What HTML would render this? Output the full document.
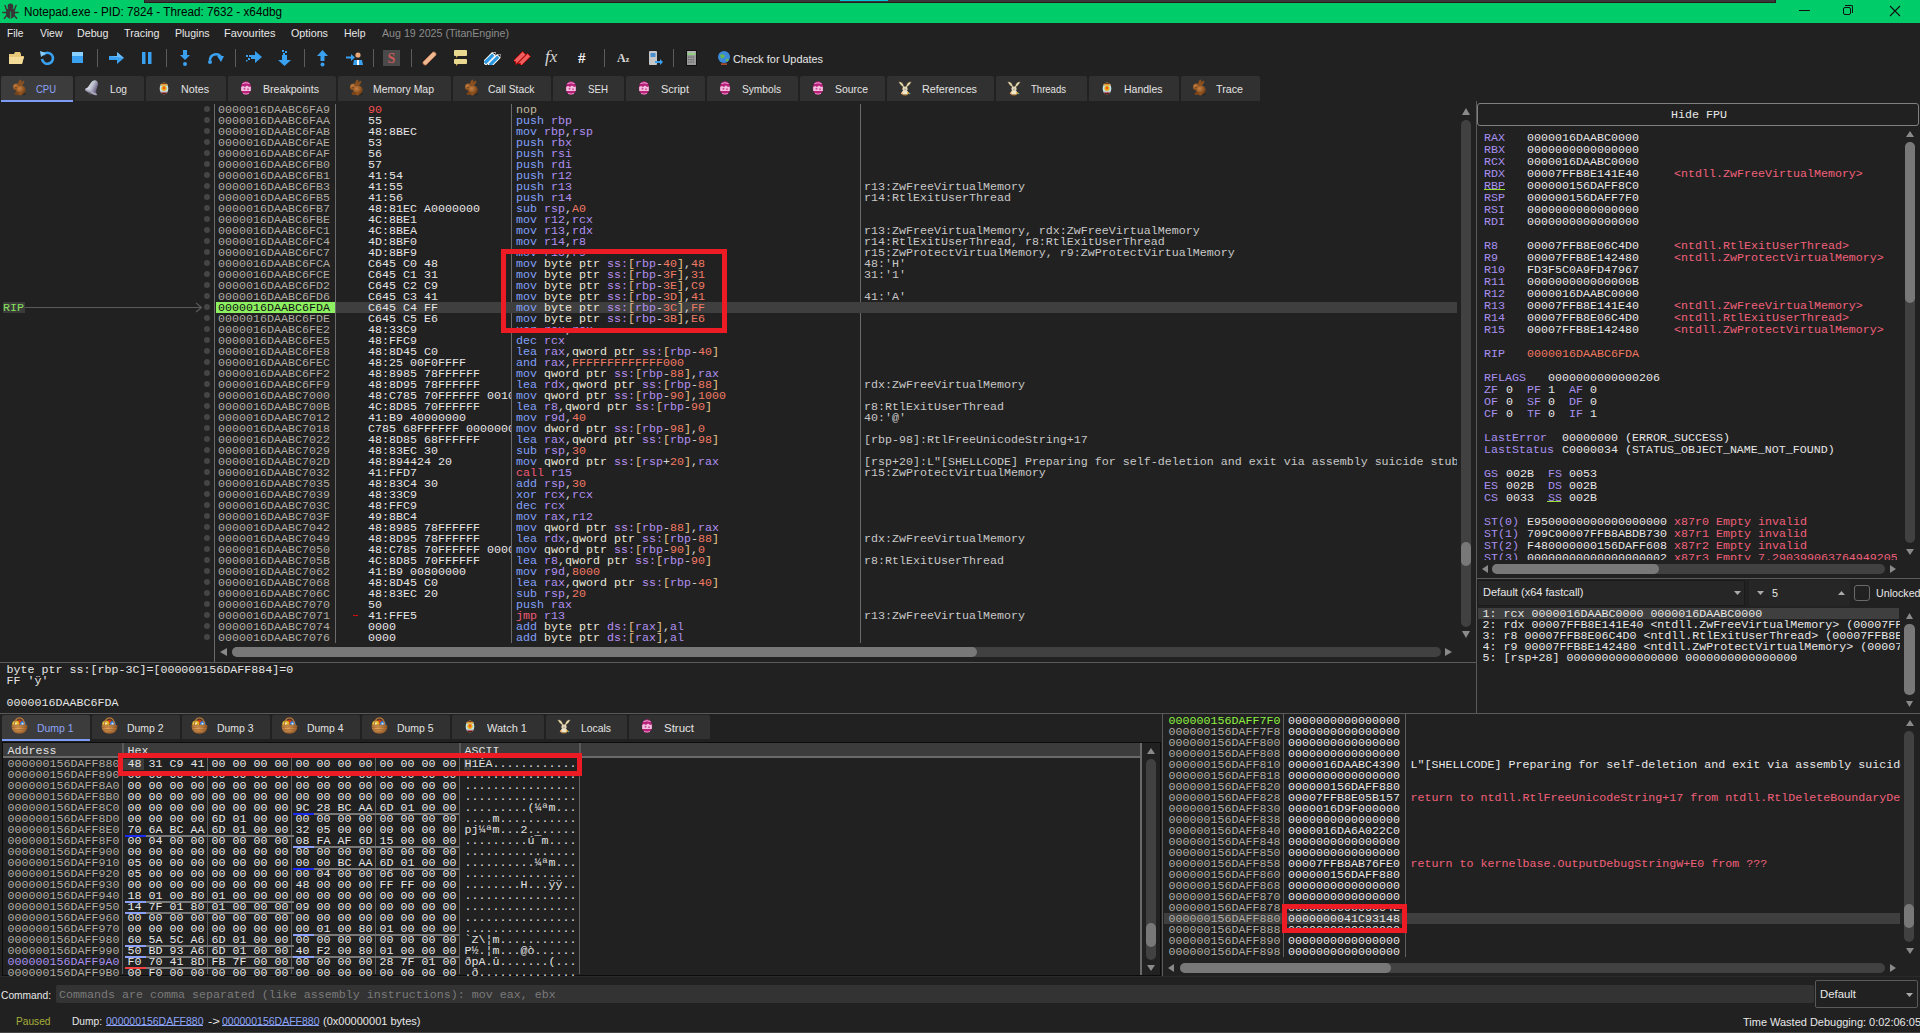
<!DOCTYPE html>
<html><head><meta charset="utf-8"><title>x64dbg</title>
<style>
html,body{margin:0;padding:0;width:1920px;height:1033px;overflow:hidden;background:#212121}
body>div,body>svg,body>div>div{position:absolute}
.m{font-family:'Liberation Mono', monospace;font-size:11.6667px;line-height:11px;white-space:pre}
.s{font-family:'Liberation Sans', sans-serif;line-height:14px;white-space:pre}
</style></head><body>
<div style="left:0px;top:0px;width:1920px;height:23px;background:#00cc6a;"></div>
<div style="left:144px;top:0px;width:1632px;height:3px;background:#2a1a1e;"></div>
<div style="left:145px;top:0px;width:1630px;height:2px;background:#383838;"></div>
<div style="left:840px;top:0px;width:48px;height:1px;background:#00c8d8;"></div>
<svg style="left:2px;top:3px" width="17" height="16" viewBox="0 0 17 16"><g fill="#363636" stroke="#363636" stroke-width="1.4" stroke-linecap="round"><circle cx="8.5" cy="3.2" r="2.8" stroke="none"/><ellipse cx="8.5" cy="10" rx="4.6" ry="5.6" stroke="none"/><path d="M4.6 7 L3 2.5 M12.4 7 L14 2.5 M4 9.5 L0.8 9.5 M13 9.5 L16.2 9.5 M4.6 12.5 L2.3 15.5 M12.4 12.5 L14.7 15.5" fill="none"/></g><rect x="7.9" y="8.5" width="1.3" height="7" fill="#0a9a52"/></svg>
<div class="s" style="left:24px;top:5px;color:#000;font-size:12px;"><span style="display:inline-block;transform:scaleX(0.9774);transform-origin:0 0">Notepad.exe - PID: 7824 - Thread: 7632 - x64dbg</span></div>
<div style="left:1799px;top:10px;width:11px;height:1px;background:#111;"></div>
<div style="left:1843px;top:7px;width:8px;height:8px;border:1px solid #111;border-radius:2px;box-sizing:border-box"></div>
<div style="left:1845px;top:5px;width:8px;height:8px;border-top:1px solid #111;border-right:1px solid #111;border-radius:0 2px 0 0;box-sizing:border-box"></div>
<svg style="left:1889px;top:5px" width="12" height="12" viewBox="0 0 12 12"><path d="M1 1 L11 11 M11 1 L1 11" stroke="#111" stroke-width="1.1"/></svg>
<div class="s" style="left:7px;top:26px;color:#e8e8e8;font-size:11px;"><span style="display:inline-block;transform:scaleX(0.9304);transform-origin:0 0">File</span></div>
<div class="s" style="left:39.5px;top:26px;color:#e8e8e8;font-size:11px;"><span style="display:inline-block;transform:scaleX(0.9511);transform-origin:0 0">View</span></div>
<div class="s" style="left:77px;top:26px;color:#e8e8e8;font-size:11px;"><span style="display:inline-block;transform:scaleX(0.9716);transform-origin:0 0">Debug</span></div>
<div class="s" style="left:124px;top:26px;color:#e8e8e8;font-size:11px;"><span style="display:inline-block;transform:scaleX(0.9785);transform-origin:0 0">Tracing</span></div>
<div class="s" style="left:175px;top:26px;color:#e8e8e8;font-size:11px;"><span style="display:inline-block;transform:scaleX(0.9563);transform-origin:0 0">Plugins</span></div>
<div class="s" style="left:224px;top:26px;color:#e8e8e8;font-size:11px;"><span style="display:inline-block;transform:scaleX(1.0027);transform-origin:0 0">Favourites</span></div>
<div class="s" style="left:291px;top:26px;color:#e8e8e8;font-size:11px;"><span style="display:inline-block;transform:scaleX(0.9757);transform-origin:0 0">Options</span></div>
<div class="s" style="left:344px;top:26px;color:#e8e8e8;font-size:11px;"><span style="display:inline-block;transform:scaleX(0.9503);transform-origin:0 0">Help</span></div>
<div class="s" style="left:382px;top:26px;color:#8c8c8c;font-size:11px;"><span style="display:inline-block;transform:scaleX(0.9689);transform-origin:0 0">Aug 19 2025 (TitanEngine)</span></div>
<div style="left:97px;top:49px;width:1px;height:18px;background:#5c5c5c;"></div>
<div style="left:166px;top:49px;width:1px;height:18px;background:#5c5c5c;"></div>
<div style="left:235px;top:49px;width:1px;height:18px;background:#5c5c5c;"></div>
<div style="left:304px;top:49px;width:1px;height:18px;background:#5c5c5c;"></div>
<div style="left:373px;top:49px;width:1px;height:18px;background:#5c5c5c;"></div>
<div style="left:411px;top:49px;width:1px;height:18px;background:#5c5c5c;"></div>
<div style="left:604px;top:49px;width:1px;height:18px;background:#5c5c5c;"></div>
<div style="left:673px;top:49px;width:1px;height:18px;background:#5c5c5c;"></div>
<svg style="left:8px;top:51px" width="17" height="14" viewBox="0 0 17 14"><path d="M1 3 L6 3 L7 1 L12 1 L13 3 L13 5 L16 5 L14 13 L1 13 Z" fill="#e8c878"/><path d="M1 6 L16 6 L14 13 L1 13 Z" fill="#f4dc98"/></svg>
<svg style="left:39px;top:50px" width="16" height="16" viewBox="0 0 16 16"><path d="M4 5 A5.5 5.5 0 1 1 3 9" fill="none" stroke="#3aa0f0" stroke-width="2.6"/><path d="M1 1 L7 3 L2 7 Z" fill="#8ad0ff"/></svg>
<svg style="left:71px;top:51px" width="13" height="13" viewBox="0 0 13 13"><rect x="1" y="1" width="11" height="11" fill="#3aa0f0"/><rect x="1" y="1" width="11" height="4" fill="#8ad0ff"/></svg>
<svg style="left:108px;top:51px" width="17" height="14" viewBox="0 0 17 14"><path d="M1 5 L9 5 L9 1 L16 7 L9 13 L9 9 L1 9 Z" fill="#3aa0f0"/><path d="M1 5 L9 5 L9 1 L16 7 Z" fill="#8ad0ff" opacity=".6"/></svg>
<svg style="left:141px;top:51px" width="12" height="14" viewBox="0 0 12 14"><rect x="1" y="1" width="3.5" height="12" fill="#3aa0f0"/><rect x="7" y="1" width="3.5" height="12" fill="#3aa0f0"/></svg>
<svg style="left:178px;top:49px" width="14" height="19" viewBox="0 0 14 19"><path d="M5 1 L9 1 L9 6 L12 6 L7 11 L2 6 L5 6 Z" fill="#3aa0f0"/><circle cx="7" cy="15" r="2" fill="#3aa0f0"/></svg>
<svg style="left:207px;top:49px" width="18" height="18" viewBox="0 0 18 18"><path d="M3 11 A6 6 0 0 1 14 8" fill="none" stroke="#3aa0f0" stroke-width="2.6"/><path d="M10 7 L17 7 L14 13 Z" fill="#3aa0f0"/><circle cx="3" cy="13" r="2" fill="#3aa0f0"/></svg>
<svg style="left:245px;top:50px" width="18" height="15" viewBox="0 0 18 15"><path d="M6 5 L10 5 L10 1 L17 7 L10 13 L10 9 L6 9 Z" fill="#3aa0f0"/><g fill="#3aa0f0"><rect x="1" y="5" width="2" height="2"/><rect x="4" y="5" width="2" height="2"/><rect x="3" y="8" width="2" height="2"/><rect x="1" y="10" width="1.5" height="1.5"/></g></svg>
<svg style="left:277px;top:49px" width="16" height="18" viewBox="0 0 16 18"><path d="M5 6 L10 6 L10 11 L14 11 L7.5 17 L1 11 L5 11 Z" fill="#3aa0f0"/><g fill="#3aa0f0"><rect x="5" y="1" width="2" height="2"/><rect x="8" y="2" width="2" height="2"/><rect x="6" y="4" width="2" height="2"/></g></svg>
<svg style="left:316px;top:49px" width="13" height="19" viewBox="0 0 13 19"><path d="M6.5 1 L12 7 L8.5 7 L8.5 12 L4.5 12 L4.5 7 L1 7 Z" fill="#3aa0f0"/><circle cx="6.5" cy="15.5" r="2" fill="#3aa0f0"/></svg>
<svg style="left:345px;top:51px" width="18" height="15" viewBox="0 0 18 15"><path d="M1 5.5 L6 5.5 L6 3 L10 6.5 L6 10 L6 7.5 L1 7.5 Z" fill="#3aa0f0"/><circle cx="13" cy="4" r="2.6" fill="#e8a878"/><path d="M8 14 L9 9 L17 9 L18 14 Z" fill="#3aa0f0"/><rect x="12" y="9" width="2" height="5" fill="#fff"/></svg>
<svg style="left:383px;top:50px" width="18" height="17" viewBox="0 0 18 17"><rect x="0" y="0" width="17" height="16" fill="#4a4a4a"/><text x="8.5" y="13" font-family="Liberation Serif" font-weight="bold" font-size="14" fill="#c85a5a" text-anchor="middle">S</text></svg>
<svg style="left:421px;top:50px" width="17" height="16" viewBox="0 0 17 16"><path d="M2 12 L12 2 A2.5 2.5 0 0 1 15 5 L5 15 A2.5 2.5 0 0 1 2 12 Z" fill="#f0b890" stroke="#c87850" stroke-width=".8"/></svg>
<svg style="left:453px;top:49px" width="15" height="18" viewBox="0 0 15 18"><rect x="1" y="1" width="13" height="6" rx="1" fill="#e8d890"/><rect x="1" y="10" width="13" height="5" rx="1" fill="#e8d890"/><path d="M3 7 L5 7 L3 9 Z M3 15 L5 15 L3 17 Z" fill="#c8a850"/></svg>
<svg style="left:484px;top:51px" width="17" height="14" viewBox="0 0 17 14"><g transform="rotate(-45 8.5 7)"><rect x="-1" y="3" width="13" height="4.2" fill="#2a98e0" stroke="#fff" stroke-width="1"/><path d="M12 3 L15 5.1 L12 7.2 Z" fill="#fff"/><circle cx="13" cy="5.1" r=".8" fill="#111"/><rect x="1" y="8" width="13" height="4.2" fill="#2a98e0" stroke="#fff" stroke-width="1"/><path d="M14 8 L17 10.1 L14 12.2 Z" fill="#fff"/><circle cx="15" cy="10.1" r=".8" fill="#111"/></g></svg>
<svg style="left:514px;top:50px" width="18" height="15" viewBox="0 0 18 15"><g transform="rotate(-45 9 7.5)"><path d="M-1 3 L13 3 L13 7.5 L-1 7.5 L1 5.2 Z" fill="#f06060" stroke="#c00000" stroke-width=".8"/><path d="M1 8 L15 8 L15 12 L1 12 L3 10 Z" fill="#f06060" stroke="#c00000" stroke-width=".8"/></g></svg>
<div style="left:545px;top:48px;font-family:'Liberation Serif';font-style:italic;font-size:17px;line-height:18px;color:#d8d8d8">fx</div>
<div style="left:578px;top:50px;font-family:'Liberation Serif';font-weight:bold;font-size:15px;line-height:17px;color:#f0f0f0">#</div>
<div style="left:617px;top:51px;font-family:'Liberation Serif';font-weight:bold;font-size:12px;line-height:14px;color:#d8d8d8">A<span style="font-size:8px">z</span></div>
<svg style="left:648px;top:50px" width="16" height="16" viewBox="0 0 16 16"><rect x="1" y="1" width="8" height="14" rx="1" fill="#c8c8c8"/><rect x="2.5" y="3" width="5" height="4" fill="#4a90d0"/><path d="M7 11 L12 11 L12 9 L15 12 L12 15 L12 13 L7 13 Z" fill="#3aa0f0"/></svg>
<svg style="left:686px;top:50px" width="11" height="16" viewBox="0 0 11 16"><rect x="0.5" y="0.5" width="10" height="15" fill="#9a9a9a" stroke="#111"/><rect x="1.5" y="1.5" width="8" height="1" fill="#ccc"/><rect x="1.5" y="3" width="8" height="2" fill="#90d080"/><g fill="#6a6a6a"><rect x="2" y="6.5" width="1.5" height="1.2"/><rect x="4.3" y="6.5" width="1.5" height="1.2"/><rect x="6.6" y="6.5" width="1.5" height="1.2"/><rect x="2" y="9" width="1.5" height="1.2"/><rect x="4.3" y="9" width="1.5" height="1.2"/><rect x="6.6" y="9" width="1.5" height="1.2"/><rect x="2" y="11.5" width="1.5" height="1.2"/><rect x="4.3" y="11.5" width="1.5" height="1.2"/><rect x="6.6" y="11.5" width="1.5" height="1.2"/></g></svg>
<svg style="left:717px;top:50px" width="14" height="15" viewBox="0 0 14 15"><circle cx="7" cy="7" r="6" fill="#3a8ad8"/><path d="M3 5 Q6 3 8 6 Q6 9 4 8 Z M9 9 Q11 8 12 10 Q10 12 9 11 Z" fill="#6ab84a"/><rect x="4" y="13.5" width="6" height="1.2" fill="#e06030"/></svg>
<div class="s" style="left:733px;top:51.5px;color:#e8e8e8;font-size:11px;"><span style="display:inline-block;transform:scaleX(0.9878);transform-origin:0 0">Check for Updates</span></div>
<div style="left:1px;top:76px;width:72px;height:25px;background:#3c3c3c;border-radius:2px 2px 0 0"></div>
<div style="left:1px;top:100px;width:72px;height:2px;background:#7c9cf8;"></div>
<svg style="left:11px;top:79px" width="16" height="17" viewBox="0 0 16 17"><defs><radialGradient id="gb" cx="35%" cy="35%" r="70%"><stop offset="0" stop-color="#c88040"/><stop offset="1" stop-color="#6a3a12"/></radialGradient></defs><ellipse cx="12" cy="15" rx="3" ry="1.2" fill="#1a1a1a" opacity=".5"/><path d="M7 6 Q7 1 10 0.5 Q11 2 10 4 Q12 1 13.5 2 Q13 5 10.5 7 Z" fill="#8a5020"/><circle cx="5.5" cy="8" r="3.6" fill="url(#gb)"/><ellipse cx="10" cy="11" rx="4.8" ry="4.6" fill="url(#gb)"/><ellipse cx="6" cy="14.5" rx="2.5" ry="1.6" fill="#7a4518"/><ellipse cx="9.5" cy="15" rx="2" ry="1.4" fill="#8a5020"/><circle cx="5" cy="8.3" r=".6" fill="#4a2008"/></svg>
<div class="s" style="left:36px;top:82px;color:#8ca4f8;font-size:11px;"><span style="display:inline-block;transform:scaleX(0.8608);transform-origin:0 0">CPU</span></div>
<div style="left:75px;top:76px;width:69px;height:25px;background:#313131;border-radius:2px 2px 0 0"></div>
<svg style="left:85px;top:79px" width="16" height="17" viewBox="0 0 16 17"><defs><linearGradient id="gbl" x1="0" y1="0" x2="1" y2="0"><stop offset="0" stop-color="#f4f6fa"/><stop offset=".45" stop-color="#b8bccc"/><stop offset=".8" stop-color="#6a6080"/><stop offset="1" stop-color="#9a94b0"/></linearGradient></defs><g transform="rotate(25 8 8)"><path d="M8 0.8 Q11.5 1 11.8 5.5 L12.5 10.5 Q13.5 12.5 15 13.5 L1 13.5 Q2.5 12.5 3.5 10.5 L4.2 5.5 Q4.5 1 8 0.8 Z" fill="url(#gbl)"/><ellipse cx="8" cy="13.6" rx="7" ry="1.3" fill="#a8a4bc"/><circle cx="8" cy="15.2" r="1.2" fill="#555"/></g></svg>
<div class="s" style="left:110px;top:82px;color:#e4e4e4;font-size:11px;"><span style="display:inline-block;transform:scaleX(0.9260);transform-origin:0 0">Log</span></div>
<div style="left:146px;top:76px;width:80px;height:25px;background:#313131;border-radius:2px 2px 0 0"></div>
<svg style="left:156px;top:79px" width="16" height="17" viewBox="0 0 16 17"><defs><clipPath id="ce"><ellipse cx="8" cy="9.5" rx="4.3" ry="6"/></clipPath></defs><g clip-path="url(#ce)"><rect x="0" y="0" width="16" height="17" fill="#c0e4e4"/><rect x="0" y="0" width="16" height="5.5" fill="#7a3810"/><rect x="0" y="5" width="16" height="1.6" fill="#e0a030"/><rect x="0" y="12.8" width="16" height="1.5" fill="#b06878"/><rect x="0" y="14" width="16" height="4" fill="#5a1808"/></g><circle cx="8" cy="9.3" r="2.6" fill="#f0b020"/><circle cx="8" cy="9" r="1.4" fill="#f06010"/></svg>
<div class="s" style="left:181px;top:82px;color:#e4e4e4;font-size:11px;"><span style="display:inline-block;transform:scaleX(0.9739);transform-origin:0 0">Notes</span></div>
<div style="left:228px;top:76px;width:108px;height:25px;background:#313131;border-radius:2px 2px 0 0"></div>
<svg style="left:238px;top:79px" width="16" height="17" viewBox="0 0 16 17"><ellipse cx="8" cy="9" rx="5.2" ry="6.8" fill="#b8207a"/><path d="M4.5 4.5 Q8 3 11.5 4.5" stroke="#f0a8d8" stroke-width="1" fill="none"/><path d="M3.2 8 L5 7 L7 8 L9 6.5 L11 8 L12.8 7.5 L12.8 12 L3.2 12 Z" fill="#f4c0e0"/><circle cx="6.5" cy="9.8" r="1" fill="#c84a98"/><circle cx="10" cy="10.2" r="1" fill="#d05aa0"/><path d="M5 14.5 Q8 15.5 11 14.5" stroke="#e8a0c8" stroke-width=".9" fill="none"/></svg>
<div class="s" style="left:263px;top:82px;color:#e4e4e4;font-size:11px;"><span style="display:inline-block;transform:scaleX(0.9640);transform-origin:0 0">Breakpoints</span></div>
<div style="left:338px;top:76px;width:113px;height:25px;background:#313131;border-radius:2px 2px 0 0"></div>
<svg style="left:348px;top:79px" width="16" height="17" viewBox="0 0 16 17"><defs><radialGradient id="gb" cx="35%" cy="35%" r="70%"><stop offset="0" stop-color="#c88040"/><stop offset="1" stop-color="#6a3a12"/></radialGradient></defs><ellipse cx="12" cy="15" rx="3" ry="1.2" fill="#1a1a1a" opacity=".5"/><path d="M7 6 Q7 1 10 0.5 Q11 2 10 4 Q12 1 13.5 2 Q13 5 10.5 7 Z" fill="#8a5020"/><circle cx="5.5" cy="8" r="3.6" fill="url(#gb)"/><ellipse cx="10" cy="11" rx="4.8" ry="4.6" fill="url(#gb)"/><ellipse cx="6" cy="14.5" rx="2.5" ry="1.6" fill="#7a4518"/><ellipse cx="9.5" cy="15" rx="2" ry="1.4" fill="#8a5020"/><circle cx="5" cy="8.3" r=".6" fill="#4a2008"/></svg>
<div class="s" style="left:373px;top:82px;color:#e4e4e4;font-size:11px;"><span style="display:inline-block;transform:scaleX(0.9503);transform-origin:0 0">Memory Map</span></div>
<div style="left:453px;top:76px;width:98px;height:25px;background:#313131;border-radius:2px 2px 0 0"></div>
<svg style="left:463px;top:79px" width="16" height="17" viewBox="0 0 16 17"><defs><radialGradient id="gb" cx="35%" cy="35%" r="70%"><stop offset="0" stop-color="#c88040"/><stop offset="1" stop-color="#6a3a12"/></radialGradient></defs><ellipse cx="12" cy="15" rx="3" ry="1.2" fill="#1a1a1a" opacity=".5"/><path d="M7 6 Q7 1 10 0.5 Q11 2 10 4 Q12 1 13.5 2 Q13 5 10.5 7 Z" fill="#8a5020"/><circle cx="5.5" cy="8" r="3.6" fill="url(#gb)"/><ellipse cx="10" cy="11" rx="4.8" ry="4.6" fill="url(#gb)"/><ellipse cx="6" cy="14.5" rx="2.5" ry="1.6" fill="#7a4518"/><ellipse cx="9.5" cy="15" rx="2" ry="1.4" fill="#8a5020"/><circle cx="5" cy="8.3" r=".6" fill="#4a2008"/></svg>
<div class="s" style="left:488px;top:82px;color:#e4e4e4;font-size:11px;"><span style="display:inline-block;transform:scaleX(0.9388);transform-origin:0 0">Call Stack</span></div>
<div style="left:553px;top:76px;width:71px;height:25px;background:#313131;border-radius:2px 2px 0 0"></div>
<svg style="left:563px;top:79px" width="16" height="17" viewBox="0 0 16 17"><ellipse cx="8" cy="9" rx="5.2" ry="6.8" fill="#b8207a"/><path d="M4.5 4.5 Q8 3 11.5 4.5" stroke="#f0a8d8" stroke-width="1" fill="none"/><path d="M3.2 8 L5 7 L7 8 L9 6.5 L11 8 L12.8 7.5 L12.8 12 L3.2 12 Z" fill="#f4c0e0"/><circle cx="6.5" cy="9.8" r="1" fill="#c84a98"/><circle cx="10" cy="10.2" r="1" fill="#d05aa0"/><path d="M5 14.5 Q8 15.5 11 14.5" stroke="#e8a0c8" stroke-width=".9" fill="none"/></svg>
<div class="s" style="left:588px;top:82px;color:#e4e4e4;font-size:11px;"><span style="display:inline-block;transform:scaleX(0.8840);transform-origin:0 0">SEH</span></div>
<div style="left:626px;top:76px;width:79px;height:25px;background:#313131;border-radius:2px 2px 0 0"></div>
<svg style="left:636px;top:79px" width="16" height="17" viewBox="0 0 16 17"><ellipse cx="8" cy="9" rx="5.2" ry="6.8" fill="#b8207a"/><path d="M4.5 4.5 Q8 3 11.5 4.5" stroke="#f0a8d8" stroke-width="1" fill="none"/><path d="M3.2 8 L5 7 L7 8 L9 6.5 L11 8 L12.8 7.5 L12.8 12 L3.2 12 Z" fill="#f4c0e0"/><circle cx="6.5" cy="9.8" r="1" fill="#c84a98"/><circle cx="10" cy="10.2" r="1" fill="#d05aa0"/><path d="M5 14.5 Q8 15.5 11 14.5" stroke="#e8a0c8" stroke-width=".9" fill="none"/></svg>
<div class="s" style="left:661px;top:82px;color:#e4e4e4;font-size:11px;"><span style="display:inline-block;transform:scaleX(0.9956);transform-origin:0 0">Script</span></div>
<div style="left:707px;top:76px;width:91px;height:25px;background:#313131;border-radius:2px 2px 0 0"></div>
<svg style="left:717px;top:79px" width="16" height="17" viewBox="0 0 16 17"><ellipse cx="8" cy="9" rx="5.2" ry="6.8" fill="#b8207a"/><path d="M4.5 4.5 Q8 3 11.5 4.5" stroke="#f0a8d8" stroke-width="1" fill="none"/><path d="M3.2 8 L5 7 L7 8 L9 6.5 L11 8 L12.8 7.5 L12.8 12 L3.2 12 Z" fill="#f4c0e0"/><circle cx="6.5" cy="9.8" r="1" fill="#c84a98"/><circle cx="10" cy="10.2" r="1" fill="#d05aa0"/><path d="M5 14.5 Q8 15.5 11 14.5" stroke="#e8a0c8" stroke-width=".9" fill="none"/></svg>
<div class="s" style="left:742px;top:82px;color:#e4e4e4;font-size:11px;"><span style="display:inline-block;transform:scaleX(0.9244);transform-origin:0 0">Symbols</span></div>
<div style="left:800px;top:76px;width:85px;height:25px;background:#313131;border-radius:2px 2px 0 0"></div>
<svg style="left:810px;top:79px" width="16" height="17" viewBox="0 0 16 17"><ellipse cx="8" cy="9" rx="5.2" ry="6.8" fill="#b8207a"/><path d="M4.5 4.5 Q8 3 11.5 4.5" stroke="#f0a8d8" stroke-width="1" fill="none"/><path d="M3.2 8 L5 7 L7 8 L9 6.5 L11 8 L12.8 7.5 L12.8 12 L3.2 12 Z" fill="#f4c0e0"/><circle cx="6.5" cy="9.8" r="1" fill="#c84a98"/><circle cx="10" cy="10.2" r="1" fill="#d05aa0"/><path d="M5 14.5 Q8 15.5 11 14.5" stroke="#e8a0c8" stroke-width=".9" fill="none"/></svg>
<div class="s" style="left:835px;top:82px;color:#e4e4e4;font-size:11px;"><span style="display:inline-block;transform:scaleX(0.9467);transform-origin:0 0">Source</span></div>
<div style="left:887px;top:76px;width:107px;height:25px;background:#313131;border-radius:2px 2px 0 0"></div>
<svg style="left:897px;top:79px" width="16" height="17" viewBox="0 0 16 17"><path d="M1.5 3 Q3 2 5.5 4 L7.5 8 L6.5 8.5 Q3 6 1.5 3 Z" fill="#e8dcb0" stroke="#3a3020" stroke-width=".5"/><path d="M14.5 3 Q13 2 10.5 4 L8.5 8 L9.5 8.5 Q13 6 14.5 3 Z" fill="#e8dcb0" stroke="#3a3020" stroke-width=".5"/><ellipse cx="8" cy="10" rx="2.6" ry="2.4" fill="#e4d8b8"/><ellipse cx="8" cy="10.5" rx="1.2" ry="1" fill="#b8b0a0"/><ellipse cx="8" cy="14" rx="3.2" ry="2.4" fill="#f0e6c8"/><rect x="5.5" y="15.5" width="5" height="1.2" fill="#6a4010"/><circle cx="4.8" cy="14.2" r="1" fill="#f0a060"/><circle cx="11.2" cy="14" r="1" fill="#e0a020"/><circle cx="12.6" cy="14.6" r=".8" fill="#60a0a0"/></svg>
<div class="s" style="left:922px;top:82px;color:#e4e4e4;font-size:11px;"><span style="display:inline-block;transform:scaleX(0.9775);transform-origin:0 0">References</span></div>
<div style="left:996px;top:76px;width:91px;height:25px;background:#313131;border-radius:2px 2px 0 0"></div>
<svg style="left:1006px;top:79px" width="16" height="17" viewBox="0 0 16 17"><path d="M1.5 3 Q3 2 5.5 4 L7.5 8 L6.5 8.5 Q3 6 1.5 3 Z" fill="#e8dcb0" stroke="#3a3020" stroke-width=".5"/><path d="M14.5 3 Q13 2 10.5 4 L8.5 8 L9.5 8.5 Q13 6 14.5 3 Z" fill="#e8dcb0" stroke="#3a3020" stroke-width=".5"/><ellipse cx="8" cy="10" rx="2.6" ry="2.4" fill="#e4d8b8"/><ellipse cx="8" cy="10.5" rx="1.2" ry="1" fill="#b8b0a0"/><ellipse cx="8" cy="14" rx="3.2" ry="2.4" fill="#f0e6c8"/><rect x="5.5" y="15.5" width="5" height="1.2" fill="#6a4010"/><circle cx="4.8" cy="14.2" r="1" fill="#f0a060"/><circle cx="11.2" cy="14" r="1" fill="#e0a020"/><circle cx="12.6" cy="14.6" r=".8" fill="#60a0a0"/></svg>
<div class="s" style="left:1031px;top:82px;color:#e4e4e4;font-size:11px;"><span style="display:inline-block;transform:scaleX(0.8672);transform-origin:0 0">Threads</span></div>
<div style="left:1089px;top:76px;width:90px;height:25px;background:#313131;border-radius:2px 2px 0 0"></div>
<svg style="left:1099px;top:79px" width="16" height="17" viewBox="0 0 16 17"><defs><clipPath id="ce"><ellipse cx="8" cy="9.5" rx="4.3" ry="6"/></clipPath></defs><g clip-path="url(#ce)"><rect x="0" y="0" width="16" height="17" fill="#c0e4e4"/><rect x="0" y="0" width="16" height="5.5" fill="#7a3810"/><rect x="0" y="5" width="16" height="1.6" fill="#e0a030"/><rect x="0" y="12.8" width="16" height="1.5" fill="#b06878"/><rect x="0" y="14" width="16" height="4" fill="#5a1808"/></g><circle cx="8" cy="9.3" r="2.6" fill="#f0b020"/><circle cx="8" cy="9" r="1.4" fill="#f06010"/></svg>
<div class="s" style="left:1124px;top:82px;color:#e4e4e4;font-size:11px;"><span style="display:inline-block;transform:scaleX(0.9539);transform-origin:0 0">Handles</span></div>
<div style="left:1181px;top:76px;width:79px;height:25px;background:#313131;border-radius:2px 2px 0 0"></div>
<svg style="left:1191px;top:79px" width="16" height="17" viewBox="0 0 16 17"><defs><radialGradient id="gb" cx="35%" cy="35%" r="70%"><stop offset="0" stop-color="#c88040"/><stop offset="1" stop-color="#6a3a12"/></radialGradient></defs><ellipse cx="12" cy="15" rx="3" ry="1.2" fill="#1a1a1a" opacity=".5"/><path d="M7 6 Q7 1 10 0.5 Q11 2 10 4 Q12 1 13.5 2 Q13 5 10.5 7 Z" fill="#8a5020"/><circle cx="5.5" cy="8" r="3.6" fill="url(#gb)"/><ellipse cx="10" cy="11" rx="4.8" ry="4.6" fill="url(#gb)"/><ellipse cx="6" cy="14.5" rx="2.5" ry="1.6" fill="#7a4518"/><ellipse cx="9.5" cy="15" rx="2" ry="1.4" fill="#8a5020"/><circle cx="5" cy="8.3" r=".6" fill="#4a2008"/></svg>
<div class="s" style="left:1216px;top:82px;color:#e4e4e4;font-size:11px;"><span style="display:inline-block;transform:scaleX(0.9741);transform-origin:0 0">Trace</span></div>
<div style="left:214px;top:104px;width:1px;height:539px;background:#6a6a6a;"></div>
<div style="left:335px;top:104px;width:1px;height:539px;background:#6a6a6a;"></div>
<div style="left:511px;top:104px;width:1px;height:539px;background:#6a6a6a;"></div>
<div style="left:860px;top:104px;width:1px;height:539px;background:#6a6a6a;"></div>
<div style="left:214px;top:643px;width:1px;height:19px;background:#6a6a6a;"></div>
<div style="left:203.5px;top:106px;width:6px;height:6px;border-radius:50%;background:#454545"></div>
<div class="m" style="left:218px;top:105px;color:#b0aca4;">0000016DAABC6FA9</div>
<div class="m" style="left:368px;top:105px;color:#f05050;width:143px;overflow:hidden">90</div>
<div class="m" style="left:516px;top:105px;width:344px;overflow:hidden"><span style="color:#c0bca0">nop</span></div>
<div style="left:203.5px;top:117px;width:6px;height:6px;border-radius:50%;background:#454545"></div>
<div class="m" style="left:218px;top:116px;color:#b0aca4;">0000016DAABC6FAA</div>
<div class="m" style="left:368px;top:116px;color:#e6e6e6;width:143px;overflow:hidden">55</div>
<div class="m" style="left:516px;top:116px;width:344px;overflow:hidden"><span style="color:#82a0f8">push</span><span style="color:#d8d8d8"> </span><span style="color:#b090f0">rbp</span></div>
<div style="left:203.5px;top:128px;width:6px;height:6px;border-radius:50%;background:#454545"></div>
<div class="m" style="left:218px;top:127px;color:#b0aca4;">0000016DAABC6FAB</div>
<div class="m" style="left:368px;top:127px;color:#e6e6e6;width:143px;overflow:hidden">48:8BEC</div>
<div class="m" style="left:516px;top:127px;width:344px;overflow:hidden"><span style="color:#82a0f8">mov</span><span style="color:#d8d8d8"> </span><span style="color:#b090f0">rbp</span><span style="color:#d8d8d8">,</span><span style="color:#b090f0">rsp</span></div>
<div style="left:203.5px;top:139px;width:6px;height:6px;border-radius:50%;background:#454545"></div>
<div class="m" style="left:218px;top:138px;color:#b0aca4;">0000016DAABC6FAE</div>
<div class="m" style="left:368px;top:138px;color:#e6e6e6;width:143px;overflow:hidden">53</div>
<div class="m" style="left:516px;top:138px;width:344px;overflow:hidden"><span style="color:#82a0f8">push</span><span style="color:#d8d8d8"> </span><span style="color:#b090f0">rbx</span></div>
<div style="left:203.5px;top:150px;width:6px;height:6px;border-radius:50%;background:#454545"></div>
<div class="m" style="left:218px;top:149px;color:#b0aca4;">0000016DAABC6FAF</div>
<div class="m" style="left:368px;top:149px;color:#e6e6e6;width:143px;overflow:hidden">56</div>
<div class="m" style="left:516px;top:149px;width:344px;overflow:hidden"><span style="color:#82a0f8">push</span><span style="color:#d8d8d8"> </span><span style="color:#b090f0">rsi</span></div>
<div style="left:203.5px;top:161px;width:6px;height:6px;border-radius:50%;background:#454545"></div>
<div class="m" style="left:218px;top:160px;color:#b0aca4;">0000016DAABC6FB0</div>
<div class="m" style="left:368px;top:160px;color:#e6e6e6;width:143px;overflow:hidden">57</div>
<div class="m" style="left:516px;top:160px;width:344px;overflow:hidden"><span style="color:#82a0f8">push</span><span style="color:#d8d8d8"> </span><span style="color:#b090f0">rdi</span></div>
<div style="left:203.5px;top:172px;width:6px;height:6px;border-radius:50%;background:#454545"></div>
<div class="m" style="left:218px;top:171px;color:#b0aca4;">0000016DAABC6FB1</div>
<div class="m" style="left:368px;top:171px;color:#e6e6e6;width:143px;overflow:hidden">41:54</div>
<div class="m" style="left:516px;top:171px;width:344px;overflow:hidden"><span style="color:#82a0f8">push</span><span style="color:#d8d8d8"> </span><span style="color:#b090f0">r12</span></div>
<div style="left:203.5px;top:183px;width:6px;height:6px;border-radius:50%;background:#454545"></div>
<div class="m" style="left:218px;top:182px;color:#b0aca4;">0000016DAABC6FB3</div>
<div class="m" style="left:368px;top:182px;color:#e6e6e6;width:143px;overflow:hidden">41:55</div>
<div class="m" style="left:516px;top:182px;width:344px;overflow:hidden"><span style="color:#82a0f8">push</span><span style="color:#d8d8d8"> </span><span style="color:#b090f0">r13</span></div>
<div class="m" style="left:864px;top:182px;color:#c8c8c8;width:593px;overflow:hidden">r13:ZwFreeVirtualMemory</div>
<div style="left:203.5px;top:194px;width:6px;height:6px;border-radius:50%;background:#454545"></div>
<div class="m" style="left:218px;top:193px;color:#b0aca4;">0000016DAABC6FB5</div>
<div class="m" style="left:368px;top:193px;color:#e6e6e6;width:143px;overflow:hidden">41:56</div>
<div class="m" style="left:516px;top:193px;width:344px;overflow:hidden"><span style="color:#82a0f8">push</span><span style="color:#d8d8d8"> </span><span style="color:#b090f0">r14</span></div>
<div class="m" style="left:864px;top:193px;color:#c8c8c8;width:593px;overflow:hidden">r14:RtlExitUserThread</div>
<div style="left:203.5px;top:205px;width:6px;height:6px;border-radius:50%;background:#454545"></div>
<div class="m" style="left:218px;top:204px;color:#b0aca4;">0000016DAABC6FB7</div>
<div class="m" style="left:368px;top:204px;color:#e6e6e6;width:143px;overflow:hidden">48:81EC A0000000</div>
<div class="m" style="left:516px;top:204px;width:344px;overflow:hidden"><span style="color:#82a0f8">sub</span><span style="color:#d8d8d8"> </span><span style="color:#b090f0">rsp</span><span style="color:#d8d8d8">,</span><span style="color:#f07a64">A0</span></div>
<div style="left:203.5px;top:216px;width:6px;height:6px;border-radius:50%;background:#454545"></div>
<div class="m" style="left:218px;top:215px;color:#b0aca4;">0000016DAABC6FBE</div>
<div class="m" style="left:368px;top:215px;color:#e6e6e6;width:143px;overflow:hidden">4C:8BE1</div>
<div class="m" style="left:516px;top:215px;width:344px;overflow:hidden"><span style="color:#82a0f8">mov</span><span style="color:#d8d8d8"> </span><span style="color:#b090f0">r12</span><span style="color:#d8d8d8">,</span><span style="color:#b090f0">rcx</span></div>
<div style="left:203.5px;top:227px;width:6px;height:6px;border-radius:50%;background:#454545"></div>
<div class="m" style="left:218px;top:226px;color:#b0aca4;">0000016DAABC6FC1</div>
<div class="m" style="left:368px;top:226px;color:#e6e6e6;width:143px;overflow:hidden">4C:8BEA</div>
<div class="m" style="left:516px;top:226px;width:344px;overflow:hidden"><span style="color:#82a0f8">mov</span><span style="color:#d8d8d8"> </span><span style="color:#b090f0">r13</span><span style="color:#d8d8d8">,</span><span style="color:#b090f0">rdx</span></div>
<div class="m" style="left:864px;top:226px;color:#c8c8c8;width:593px;overflow:hidden">r13:ZwFreeVirtualMemory, rdx:ZwFreeVirtualMemory</div>
<div style="left:203.5px;top:238px;width:6px;height:6px;border-radius:50%;background:#454545"></div>
<div class="m" style="left:218px;top:237px;color:#b0aca4;">0000016DAABC6FC4</div>
<div class="m" style="left:368px;top:237px;color:#e6e6e6;width:143px;overflow:hidden">4D:8BF0</div>
<div class="m" style="left:516px;top:237px;width:344px;overflow:hidden"><span style="color:#82a0f8">mov</span><span style="color:#d8d8d8"> </span><span style="color:#b090f0">r14</span><span style="color:#d8d8d8">,</span><span style="color:#b090f0">r8</span></div>
<div class="m" style="left:864px;top:237px;color:#c8c8c8;width:593px;overflow:hidden">r14:RtlExitUserThread, r8:RtlExitUserThread</div>
<div style="left:203.5px;top:249px;width:6px;height:6px;border-radius:50%;background:#454545"></div>
<div class="m" style="left:218px;top:248px;color:#b0aca4;">0000016DAABC6FC7</div>
<div class="m" style="left:368px;top:248px;color:#e6e6e6;width:143px;overflow:hidden">4D:8BF9</div>
<div class="m" style="left:516px;top:248px;width:344px;overflow:hidden"><span style="color:#82a0f8">mov</span><span style="color:#d8d8d8"> </span><span style="color:#b090f0">r15</span><span style="color:#d8d8d8">,</span><span style="color:#b090f0">r9</span></div>
<div class="m" style="left:864px;top:248px;color:#c8c8c8;width:593px;overflow:hidden">r15:ZwProtectVirtualMemory, r9:ZwProtectVirtualMemory</div>
<div style="left:203.5px;top:260px;width:6px;height:6px;border-radius:50%;background:#454545"></div>
<div class="m" style="left:218px;top:259px;color:#b0aca4;">0000016DAABC6FCA</div>
<div class="m" style="left:368px;top:259px;color:#e6e6e6;width:143px;overflow:hidden">C645 C0 48</div>
<div class="m" style="left:516px;top:259px;width:344px;overflow:hidden"><span style="color:#82a0f8">mov</span><span style="color:#d8d8d8"> </span><span style="color:#e8e6d8">byte ptr</span><span style="color:#d8d8d8"> </span><span style="color:#b890f0">ss:</span><span style="color:#e8c48c">[</span><span style="color:#b090f0">rbp</span><span style="color:#d8d8d8">-</span><span style="color:#f07a64">40</span><span style="color:#e8c48c">]</span><span style="color:#d8d8d8">,</span><span style="color:#f07a64">48</span></div>
<div class="m" style="left:864px;top:259px;color:#c8c8c8;width:593px;overflow:hidden">48:'H'</div>
<div style="left:203.5px;top:271px;width:6px;height:6px;border-radius:50%;background:#454545"></div>
<div class="m" style="left:218px;top:270px;color:#b0aca4;">0000016DAABC6FCE</div>
<div class="m" style="left:368px;top:270px;color:#e6e6e6;width:143px;overflow:hidden">C645 C1 31</div>
<div class="m" style="left:516px;top:270px;width:344px;overflow:hidden"><span style="color:#82a0f8">mov</span><span style="color:#d8d8d8"> </span><span style="color:#e8e6d8">byte ptr</span><span style="color:#d8d8d8"> </span><span style="color:#b890f0">ss:</span><span style="color:#e8c48c">[</span><span style="color:#b090f0">rbp</span><span style="color:#d8d8d8">-</span><span style="color:#f07a64">3F</span><span style="color:#e8c48c">]</span><span style="color:#d8d8d8">,</span><span style="color:#f07a64">31</span></div>
<div class="m" style="left:864px;top:270px;color:#c8c8c8;width:593px;overflow:hidden">31:'1'</div>
<div style="left:203.5px;top:282px;width:6px;height:6px;border-radius:50%;background:#454545"></div>
<div class="m" style="left:218px;top:281px;color:#b0aca4;">0000016DAABC6FD2</div>
<div class="m" style="left:368px;top:281px;color:#e6e6e6;width:143px;overflow:hidden">C645 C2 C9</div>
<div class="m" style="left:516px;top:281px;width:344px;overflow:hidden"><span style="color:#82a0f8">mov</span><span style="color:#d8d8d8"> </span><span style="color:#e8e6d8">byte ptr</span><span style="color:#d8d8d8"> </span><span style="color:#b890f0">ss:</span><span style="color:#e8c48c">[</span><span style="color:#b090f0">rbp</span><span style="color:#d8d8d8">-</span><span style="color:#f07a64">3E</span><span style="color:#e8c48c">]</span><span style="color:#d8d8d8">,</span><span style="color:#f07a64">C9</span></div>
<div style="left:203.5px;top:293px;width:6px;height:6px;border-radius:50%;background:#454545"></div>
<div class="m" style="left:218px;top:292px;color:#b0aca4;">0000016DAABC6FD6</div>
<div class="m" style="left:368px;top:292px;color:#e6e6e6;width:143px;overflow:hidden">C645 C3 41</div>
<div class="m" style="left:516px;top:292px;width:344px;overflow:hidden"><span style="color:#82a0f8">mov</span><span style="color:#d8d8d8"> </span><span style="color:#e8e6d8">byte ptr</span><span style="color:#d8d8d8"> </span><span style="color:#b890f0">ss:</span><span style="color:#e8c48c">[</span><span style="color:#b090f0">rbp</span><span style="color:#d8d8d8">-</span><span style="color:#f07a64">3D</span><span style="color:#e8c48c">]</span><span style="color:#d8d8d8">,</span><span style="color:#f07a64">41</span></div>
<div class="m" style="left:864px;top:292px;color:#c8c8c8;width:593px;overflow:hidden">41:'A'</div>
<div style="left:203.5px;top:304px;width:6px;height:6px;border-radius:50%;background:#454545"></div>
<div style="left:216px;top:302px;width:119px;height:11px;background:#8cf060;"></div>
<div style="left:336px;top:302px;width:1121px;height:11px;background:#3f3f3f;"></div>
<div class="m" style="left:218px;top:303px;color:#111;">0000016DAABC6FDA</div>
<div class="m" style="left:368px;top:303px;color:#e6e6e6;width:143px;overflow:hidden">C645 C4 FF</div>
<div class="m" style="left:516px;top:303px;width:344px;overflow:hidden"><span style="color:#82a0f8">mov</span><span style="color:#d8d8d8"> </span><span style="color:#e8e6d8">byte ptr</span><span style="color:#d8d8d8"> </span><span style="color:#b890f0">ss:</span><span style="color:#e8c48c">[</span><span style="color:#b090f0">rbp</span><span style="color:#d8d8d8">-</span><span style="color:#f07a64">3C</span><span style="color:#e8c48c">]</span><span style="color:#d8d8d8">,</span><span style="color:#f07a64">FF</span></div>
<div style="left:203.5px;top:315px;width:6px;height:6px;border-radius:50%;background:#454545"></div>
<div class="m" style="left:218px;top:314px;color:#b0aca4;">0000016DAABC6FDE</div>
<div class="m" style="left:368px;top:314px;color:#e6e6e6;width:143px;overflow:hidden">C645 C5 E6</div>
<div class="m" style="left:516px;top:314px;width:344px;overflow:hidden"><span style="color:#82a0f8">mov</span><span style="color:#d8d8d8"> </span><span style="color:#e8e6d8">byte ptr</span><span style="color:#d8d8d8"> </span><span style="color:#b890f0">ss:</span><span style="color:#e8c48c">[</span><span style="color:#b090f0">rbp</span><span style="color:#d8d8d8">-</span><span style="color:#f07a64">3B</span><span style="color:#e8c48c">]</span><span style="color:#d8d8d8">,</span><span style="color:#f07a64">E6</span></div>
<div style="left:203.5px;top:326px;width:6px;height:6px;border-radius:50%;background:#454545"></div>
<div class="m" style="left:218px;top:325px;color:#b0aca4;">0000016DAABC6FE2</div>
<div class="m" style="left:368px;top:325px;color:#e6e6e6;width:143px;overflow:hidden">48:33C9</div>
<div class="m" style="left:516px;top:325px;width:344px;overflow:hidden"><span style="color:#82a0f8">xor</span><span style="color:#d8d8d8"> </span><span style="color:#b090f0">rcx</span><span style="color:#d8d8d8">,</span><span style="color:#b090f0">rcx</span></div>
<div style="left:203.5px;top:337px;width:6px;height:6px;border-radius:50%;background:#454545"></div>
<div class="m" style="left:218px;top:336px;color:#b0aca4;">0000016DAABC6FE5</div>
<div class="m" style="left:368px;top:336px;color:#e6e6e6;width:143px;overflow:hidden">48:FFC9</div>
<div class="m" style="left:516px;top:336px;width:344px;overflow:hidden"><span style="color:#82a0f8">dec</span><span style="color:#d8d8d8"> </span><span style="color:#b090f0">rcx</span></div>
<div style="left:203.5px;top:348px;width:6px;height:6px;border-radius:50%;background:#454545"></div>
<div class="m" style="left:218px;top:347px;color:#b0aca4;">0000016DAABC6FE8</div>
<div class="m" style="left:368px;top:347px;color:#e6e6e6;width:143px;overflow:hidden">48:8D45 C0</div>
<div class="m" style="left:516px;top:347px;width:344px;overflow:hidden"><span style="color:#82a0f8">lea</span><span style="color:#d8d8d8"> </span><span style="color:#b090f0">rax</span><span style="color:#d8d8d8">,</span><span style="color:#e8e6d8">qword ptr</span><span style="color:#d8d8d8"> </span><span style="color:#b890f0">ss:</span><span style="color:#e8c48c">[</span><span style="color:#b090f0">rbp</span><span style="color:#d8d8d8">-</span><span style="color:#f07a64">40</span><span style="color:#e8c48c">]</span></div>
<div style="left:203.5px;top:359px;width:6px;height:6px;border-radius:50%;background:#454545"></div>
<div class="m" style="left:218px;top:358px;color:#b0aca4;">0000016DAABC6FEC</div>
<div class="m" style="left:368px;top:358px;color:#e6e6e6;width:143px;overflow:hidden">48:25 00F0FFFF</div>
<div class="m" style="left:516px;top:358px;width:344px;overflow:hidden"><span style="color:#82a0f8">and</span><span style="color:#d8d8d8"> </span><span style="color:#b090f0">rax</span><span style="color:#d8d8d8">,</span><span style="color:#f07a64">FFFFFFFFFFFFF000</span></div>
<div style="left:203.5px;top:370px;width:6px;height:6px;border-radius:50%;background:#454545"></div>
<div class="m" style="left:218px;top:369px;color:#b0aca4;">0000016DAABC6FF2</div>
<div class="m" style="left:368px;top:369px;color:#e6e6e6;width:143px;overflow:hidden">48:8985 78FFFFFF</div>
<div class="m" style="left:516px;top:369px;width:344px;overflow:hidden"><span style="color:#82a0f8">mov</span><span style="color:#d8d8d8"> </span><span style="color:#e8e6d8">qword ptr</span><span style="color:#d8d8d8"> </span><span style="color:#b890f0">ss:</span><span style="color:#e8c48c">[</span><span style="color:#b090f0">rbp</span><span style="color:#d8d8d8">-</span><span style="color:#f07a64">88</span><span style="color:#e8c48c">]</span><span style="color:#d8d8d8">,</span><span style="color:#b090f0">rax</span></div>
<div style="left:203.5px;top:381px;width:6px;height:6px;border-radius:50%;background:#454545"></div>
<div class="m" style="left:218px;top:380px;color:#b0aca4;">0000016DAABC6FF9</div>
<div class="m" style="left:368px;top:380px;color:#e6e6e6;width:143px;overflow:hidden">48:8D95 78FFFFFF</div>
<div class="m" style="left:516px;top:380px;width:344px;overflow:hidden"><span style="color:#82a0f8">lea</span><span style="color:#d8d8d8"> </span><span style="color:#b090f0">rdx</span><span style="color:#d8d8d8">,</span><span style="color:#e8e6d8">qword ptr</span><span style="color:#d8d8d8"> </span><span style="color:#b890f0">ss:</span><span style="color:#e8c48c">[</span><span style="color:#b090f0">rbp</span><span style="color:#d8d8d8">-</span><span style="color:#f07a64">88</span><span style="color:#e8c48c">]</span></div>
<div class="m" style="left:864px;top:380px;color:#c8c8c8;width:593px;overflow:hidden">rdx:ZwFreeVirtualMemory</div>
<div style="left:203.5px;top:392px;width:6px;height:6px;border-radius:50%;background:#454545"></div>
<div class="m" style="left:218px;top:391px;color:#b0aca4;">0000016DAABC7000</div>
<div class="m" style="left:368px;top:391px;color:#e6e6e6;width:143px;overflow:hidden">48:C785 70FFFFFF 00100000</div>
<div class="m" style="left:516px;top:391px;width:344px;overflow:hidden"><span style="color:#82a0f8">mov</span><span style="color:#d8d8d8"> </span><span style="color:#e8e6d8">qword ptr</span><span style="color:#d8d8d8"> </span><span style="color:#b890f0">ss:</span><span style="color:#e8c48c">[</span><span style="color:#b090f0">rbp</span><span style="color:#d8d8d8">-</span><span style="color:#f07a64">90</span><span style="color:#e8c48c">]</span><span style="color:#d8d8d8">,</span><span style="color:#f07a64">1000</span></div>
<div style="left:203.5px;top:403px;width:6px;height:6px;border-radius:50%;background:#454545"></div>
<div class="m" style="left:218px;top:402px;color:#b0aca4;">0000016DAABC700B</div>
<div class="m" style="left:368px;top:402px;color:#e6e6e6;width:143px;overflow:hidden">4C:8D85 70FFFFFF</div>
<div class="m" style="left:516px;top:402px;width:344px;overflow:hidden"><span style="color:#82a0f8">lea</span><span style="color:#d8d8d8"> </span><span style="color:#b090f0">r8</span><span style="color:#d8d8d8">,</span><span style="color:#e8e6d8">qword ptr</span><span style="color:#d8d8d8"> </span><span style="color:#b890f0">ss:</span><span style="color:#e8c48c">[</span><span style="color:#b090f0">rbp</span><span style="color:#d8d8d8">-</span><span style="color:#f07a64">90</span><span style="color:#e8c48c">]</span></div>
<div class="m" style="left:864px;top:402px;color:#c8c8c8;width:593px;overflow:hidden">r8:RtlExitUserThread</div>
<div style="left:203.5px;top:414px;width:6px;height:6px;border-radius:50%;background:#454545"></div>
<div class="m" style="left:218px;top:413px;color:#b0aca4;">0000016DAABC7012</div>
<div class="m" style="left:368px;top:413px;color:#e6e6e6;width:143px;overflow:hidden">41:B9 40000000</div>
<div class="m" style="left:516px;top:413px;width:344px;overflow:hidden"><span style="color:#82a0f8">mov</span><span style="color:#d8d8d8"> </span><span style="color:#b090f0">r9d</span><span style="color:#d8d8d8">,</span><span style="color:#f07a64">40</span></div>
<div class="m" style="left:864px;top:413px;color:#c8c8c8;width:593px;overflow:hidden">40:'@'</div>
<div style="left:203.5px;top:425px;width:6px;height:6px;border-radius:50%;background:#454545"></div>
<div class="m" style="left:218px;top:424px;color:#b0aca4;">0000016DAABC7018</div>
<div class="m" style="left:368px;top:424px;color:#e6e6e6;width:143px;overflow:hidden">C785 68FFFFFF 00000000</div>
<div class="m" style="left:516px;top:424px;width:344px;overflow:hidden"><span style="color:#82a0f8">mov</span><span style="color:#d8d8d8"> </span><span style="color:#e8e6d8">dword ptr</span><span style="color:#d8d8d8"> </span><span style="color:#b890f0">ss:</span><span style="color:#e8c48c">[</span><span style="color:#b090f0">rbp</span><span style="color:#d8d8d8">-</span><span style="color:#f07a64">98</span><span style="color:#e8c48c">]</span><span style="color:#d8d8d8">,</span><span style="color:#f07a64">0</span></div>
<div style="left:203.5px;top:436px;width:6px;height:6px;border-radius:50%;background:#454545"></div>
<div class="m" style="left:218px;top:435px;color:#b0aca4;">0000016DAABC7022</div>
<div class="m" style="left:368px;top:435px;color:#e6e6e6;width:143px;overflow:hidden">48:8D85 68FFFFFF</div>
<div class="m" style="left:516px;top:435px;width:344px;overflow:hidden"><span style="color:#82a0f8">lea</span><span style="color:#d8d8d8"> </span><span style="color:#b090f0">rax</span><span style="color:#d8d8d8">,</span><span style="color:#e8e6d8">qword ptr</span><span style="color:#d8d8d8"> </span><span style="color:#b890f0">ss:</span><span style="color:#e8c48c">[</span><span style="color:#b090f0">rbp</span><span style="color:#d8d8d8">-</span><span style="color:#f07a64">98</span><span style="color:#e8c48c">]</span></div>
<div class="m" style="left:864px;top:435px;color:#c8c8c8;width:593px;overflow:hidden">[rbp-98]:RtlFreeUnicodeString+17</div>
<div style="left:203.5px;top:447px;width:6px;height:6px;border-radius:50%;background:#454545"></div>
<div class="m" style="left:218px;top:446px;color:#b0aca4;">0000016DAABC7029</div>
<div class="m" style="left:368px;top:446px;color:#e6e6e6;width:143px;overflow:hidden">48:83EC 30</div>
<div class="m" style="left:516px;top:446px;width:344px;overflow:hidden"><span style="color:#82a0f8">sub</span><span style="color:#d8d8d8"> </span><span style="color:#b090f0">rsp</span><span style="color:#d8d8d8">,</span><span style="color:#f07a64">30</span></div>
<div style="left:203.5px;top:458px;width:6px;height:6px;border-radius:50%;background:#454545"></div>
<div class="m" style="left:218px;top:457px;color:#b0aca4;">0000016DAABC702D</div>
<div class="m" style="left:368px;top:457px;color:#e6e6e6;width:143px;overflow:hidden">48:894424 20</div>
<div class="m" style="left:516px;top:457px;width:344px;overflow:hidden"><span style="color:#82a0f8">mov</span><span style="color:#d8d8d8"> </span><span style="color:#e8e6d8">qword ptr</span><span style="color:#d8d8d8"> </span><span style="color:#b890f0">ss:</span><span style="color:#e8c48c">[</span><span style="color:#b090f0">rsp</span><span style="color:#d8d8d8">+</span><span style="color:#f07a64">20</span><span style="color:#e8c48c">]</span><span style="color:#d8d8d8">,</span><span style="color:#b090f0">rax</span></div>
<div class="m" style="left:864px;top:457px;color:#c8c8c8;width:593px;overflow:hidden">[rsp+20]:L"[SHELLCODE] Preparing for self-deletion and exit via assembly suicide stub"</div>
<div style="left:203.5px;top:469px;width:6px;height:6px;border-radius:50%;background:#454545"></div>
<div class="m" style="left:218px;top:468px;color:#b0aca4;">0000016DAABC7032</div>
<div class="m" style="left:368px;top:468px;color:#e6e6e6;width:143px;overflow:hidden">41:FFD7</div>
<div class="m" style="left:516px;top:468px;width:344px;overflow:hidden"><span style="color:#f05a78">call</span><span style="color:#d8d8d8"> </span><span style="color:#b090f0">r15</span></div>
<div class="m" style="left:864px;top:468px;color:#c8c8c8;width:593px;overflow:hidden">r15:ZwProtectVirtualMemory</div>
<div style="left:203.5px;top:480px;width:6px;height:6px;border-radius:50%;background:#454545"></div>
<div class="m" style="left:218px;top:479px;color:#b0aca4;">0000016DAABC7035</div>
<div class="m" style="left:368px;top:479px;color:#e6e6e6;width:143px;overflow:hidden">48:83C4 30</div>
<div class="m" style="left:516px;top:479px;width:344px;overflow:hidden"><span style="color:#82a0f8">add</span><span style="color:#d8d8d8"> </span><span style="color:#b090f0">rsp</span><span style="color:#d8d8d8">,</span><span style="color:#f07a64">30</span></div>
<div style="left:203.5px;top:491px;width:6px;height:6px;border-radius:50%;background:#454545"></div>
<div class="m" style="left:218px;top:490px;color:#b0aca4;">0000016DAABC7039</div>
<div class="m" style="left:368px;top:490px;color:#e6e6e6;width:143px;overflow:hidden">48:33C9</div>
<div class="m" style="left:516px;top:490px;width:344px;overflow:hidden"><span style="color:#82a0f8">xor</span><span style="color:#d8d8d8"> </span><span style="color:#b090f0">rcx</span><span style="color:#d8d8d8">,</span><span style="color:#b090f0">rcx</span></div>
<div style="left:203.5px;top:502px;width:6px;height:6px;border-radius:50%;background:#454545"></div>
<div class="m" style="left:218px;top:501px;color:#b0aca4;">0000016DAABC703C</div>
<div class="m" style="left:368px;top:501px;color:#e6e6e6;width:143px;overflow:hidden">48:FFC9</div>
<div class="m" style="left:516px;top:501px;width:344px;overflow:hidden"><span style="color:#82a0f8">dec</span><span style="color:#d8d8d8"> </span><span style="color:#b090f0">rcx</span></div>
<div style="left:203.5px;top:513px;width:6px;height:6px;border-radius:50%;background:#454545"></div>
<div class="m" style="left:218px;top:512px;color:#b0aca4;">0000016DAABC703F</div>
<div class="m" style="left:368px;top:512px;color:#e6e6e6;width:143px;overflow:hidden">49:8BC4</div>
<div class="m" style="left:516px;top:512px;width:344px;overflow:hidden"><span style="color:#82a0f8">mov</span><span style="color:#d8d8d8"> </span><span style="color:#b090f0">rax</span><span style="color:#d8d8d8">,</span><span style="color:#b090f0">r12</span></div>
<div style="left:203.5px;top:524px;width:6px;height:6px;border-radius:50%;background:#454545"></div>
<div class="m" style="left:218px;top:523px;color:#b0aca4;">0000016DAABC7042</div>
<div class="m" style="left:368px;top:523px;color:#e6e6e6;width:143px;overflow:hidden">48:8985 78FFFFFF</div>
<div class="m" style="left:516px;top:523px;width:344px;overflow:hidden"><span style="color:#82a0f8">mov</span><span style="color:#d8d8d8"> </span><span style="color:#e8e6d8">qword ptr</span><span style="color:#d8d8d8"> </span><span style="color:#b890f0">ss:</span><span style="color:#e8c48c">[</span><span style="color:#b090f0">rbp</span><span style="color:#d8d8d8">-</span><span style="color:#f07a64">88</span><span style="color:#e8c48c">]</span><span style="color:#d8d8d8">,</span><span style="color:#b090f0">rax</span></div>
<div style="left:203.5px;top:535px;width:6px;height:6px;border-radius:50%;background:#454545"></div>
<div class="m" style="left:218px;top:534px;color:#b0aca4;">0000016DAABC7049</div>
<div class="m" style="left:368px;top:534px;color:#e6e6e6;width:143px;overflow:hidden">48:8D95 78FFFFFF</div>
<div class="m" style="left:516px;top:534px;width:344px;overflow:hidden"><span style="color:#82a0f8">lea</span><span style="color:#d8d8d8"> </span><span style="color:#b090f0">rdx</span><span style="color:#d8d8d8">,</span><span style="color:#e8e6d8">qword ptr</span><span style="color:#d8d8d8"> </span><span style="color:#b890f0">ss:</span><span style="color:#e8c48c">[</span><span style="color:#b090f0">rbp</span><span style="color:#d8d8d8">-</span><span style="color:#f07a64">88</span><span style="color:#e8c48c">]</span></div>
<div class="m" style="left:864px;top:534px;color:#c8c8c8;width:593px;overflow:hidden">rdx:ZwFreeVirtualMemory</div>
<div style="left:203.5px;top:546px;width:6px;height:6px;border-radius:50%;background:#454545"></div>
<div class="m" style="left:218px;top:545px;color:#b0aca4;">0000016DAABC7050</div>
<div class="m" style="left:368px;top:545px;color:#e6e6e6;width:143px;overflow:hidden">48:C785 70FFFFFF 00000000</div>
<div class="m" style="left:516px;top:545px;width:344px;overflow:hidden"><span style="color:#82a0f8">mov</span><span style="color:#d8d8d8"> </span><span style="color:#e8e6d8">qword ptr</span><span style="color:#d8d8d8"> </span><span style="color:#b890f0">ss:</span><span style="color:#e8c48c">[</span><span style="color:#b090f0">rbp</span><span style="color:#d8d8d8">-</span><span style="color:#f07a64">90</span><span style="color:#e8c48c">]</span><span style="color:#d8d8d8">,</span><span style="color:#f07a64">0</span></div>
<div style="left:203.5px;top:557px;width:6px;height:6px;border-radius:50%;background:#454545"></div>
<div class="m" style="left:218px;top:556px;color:#b0aca4;">0000016DAABC705B</div>
<div class="m" style="left:368px;top:556px;color:#e6e6e6;width:143px;overflow:hidden">4C:8D85 70FFFFFF</div>
<div class="m" style="left:516px;top:556px;width:344px;overflow:hidden"><span style="color:#82a0f8">lea</span><span style="color:#d8d8d8"> </span><span style="color:#b090f0">r8</span><span style="color:#d8d8d8">,</span><span style="color:#e8e6d8">qword ptr</span><span style="color:#d8d8d8"> </span><span style="color:#b890f0">ss:</span><span style="color:#e8c48c">[</span><span style="color:#b090f0">rbp</span><span style="color:#d8d8d8">-</span><span style="color:#f07a64">90</span><span style="color:#e8c48c">]</span></div>
<div class="m" style="left:864px;top:556px;color:#c8c8c8;width:593px;overflow:hidden">r8:RtlExitUserThread</div>
<div style="left:203.5px;top:568px;width:6px;height:6px;border-radius:50%;background:#454545"></div>
<div class="m" style="left:218px;top:567px;color:#b0aca4;">0000016DAABC7062</div>
<div class="m" style="left:368px;top:567px;color:#e6e6e6;width:143px;overflow:hidden">41:B9 00800000</div>
<div class="m" style="left:516px;top:567px;width:344px;overflow:hidden"><span style="color:#82a0f8">mov</span><span style="color:#d8d8d8"> </span><span style="color:#b090f0">r9d</span><span style="color:#d8d8d8">,</span><span style="color:#f07a64">8000</span></div>
<div style="left:203.5px;top:579px;width:6px;height:6px;border-radius:50%;background:#454545"></div>
<div class="m" style="left:218px;top:578px;color:#b0aca4;">0000016DAABC7068</div>
<div class="m" style="left:368px;top:578px;color:#e6e6e6;width:143px;overflow:hidden">48:8D45 C0</div>
<div class="m" style="left:516px;top:578px;width:344px;overflow:hidden"><span style="color:#82a0f8">lea</span><span style="color:#d8d8d8"> </span><span style="color:#b090f0">rax</span><span style="color:#d8d8d8">,</span><span style="color:#e8e6d8">qword ptr</span><span style="color:#d8d8d8"> </span><span style="color:#b890f0">ss:</span><span style="color:#e8c48c">[</span><span style="color:#b090f0">rbp</span><span style="color:#d8d8d8">-</span><span style="color:#f07a64">40</span><span style="color:#e8c48c">]</span></div>
<div style="left:203.5px;top:590px;width:6px;height:6px;border-radius:50%;background:#454545"></div>
<div class="m" style="left:218px;top:589px;color:#b0aca4;">0000016DAABC706C</div>
<div class="m" style="left:368px;top:589px;color:#e6e6e6;width:143px;overflow:hidden">48:83EC 20</div>
<div class="m" style="left:516px;top:589px;width:344px;overflow:hidden"><span style="color:#82a0f8">sub</span><span style="color:#d8d8d8"> </span><span style="color:#b090f0">rsp</span><span style="color:#d8d8d8">,</span><span style="color:#f07a64">20</span></div>
<div style="left:203.5px;top:601px;width:6px;height:6px;border-radius:50%;background:#454545"></div>
<div class="m" style="left:218px;top:600px;color:#b0aca4;">0000016DAABC7070</div>
<div class="m" style="left:368px;top:600px;color:#e6e6e6;width:143px;overflow:hidden">50</div>
<div class="m" style="left:516px;top:600px;width:344px;overflow:hidden"><span style="color:#82a0f8">push</span><span style="color:#d8d8d8"> </span><span style="color:#b090f0">rax</span></div>
<div style="left:203.5px;top:612px;width:6px;height:6px;border-radius:50%;background:#454545"></div>
<div class="m" style="left:218px;top:611px;color:#b0aca4;">0000016DAABC7071</div>
<div class="m" style="left:368px;top:611px;color:#e6e6e6;width:143px;overflow:hidden">41:FFE5</div>
<div class="m" style="left:516px;top:611px;width:344px;overflow:hidden"><span style="color:#f05a78">jmp</span><span style="color:#d8d8d8"> </span><span style="color:#b090f0">r13</span></div>
<div class="m" style="left:864px;top:611px;color:#c8c8c8;width:593px;overflow:hidden">r13:ZwFreeVirtualMemory</div>
<div style="left:203.5px;top:623px;width:6px;height:6px;border-radius:50%;background:#454545"></div>
<div class="m" style="left:218px;top:622px;color:#b0aca4;">0000016DAABC7074</div>
<div class="m" style="left:368px;top:622px;color:#e6e6e6;width:143px;overflow:hidden">0000</div>
<div class="m" style="left:516px;top:622px;width:344px;overflow:hidden"><span style="color:#82a0f8">add</span><span style="color:#d8d8d8"> </span><span style="color:#e8e6d8">byte ptr</span><span style="color:#d8d8d8"> </span><span style="color:#b890f0">ds:</span><span style="color:#e8c48c">[</span><span style="color:#b090f0">rax</span><span style="color:#e8c48c">]</span><span style="color:#d8d8d8">,</span><span style="color:#b090f0">al</span></div>
<div style="left:203.5px;top:634px;width:6px;height:6px;border-radius:50%;background:#454545"></div>
<div class="m" style="left:218px;top:633px;color:#b0aca4;">0000016DAABC7076</div>
<div class="m" style="left:368px;top:633px;color:#e6e6e6;width:143px;overflow:hidden">0000</div>
<div class="m" style="left:516px;top:633px;width:344px;overflow:hidden"><span style="color:#82a0f8">add</span><span style="color:#d8d8d8"> </span><span style="color:#e8e6d8">byte ptr</span><span style="color:#d8d8d8"> </span><span style="color:#b890f0">ds:</span><span style="color:#e8c48c">[</span><span style="color:#b090f0">rax</span><span style="color:#e8c48c">]</span><span style="color:#d8d8d8">,</span><span style="color:#b090f0">al</span></div>
<div style="left:3px;top:302px;width:22px;height:11px;background:#3a3a3a;"></div>
<div class="m" style="left:3px;top:303px;color:#86e05a;">RIP</div>
<div style="left:25px;top:307px;width:176px;height:1px;background:#5a5a5a;"></div>
<svg style="left:195px;top:302px" width="8" height="11" viewBox="0 0 8 11"><path d="M1 1 L6.5 5.5 L1 10" fill="none" stroke="#5a5a5a" stroke-width="1.2"/></svg>
<div style="left:353px;top:615px;width:5px;height:1px;background:#d01010;"></div>
<svg style="left:1461px;top:107px" width="10" height="9" viewBox="0 0 10 9"><path d="M1 8 L5 1 L9 8 Z" fill="#8a8a8a"/></svg>
<div style="left:1461px;top:120px;width:10px;height:507px;background:#414141;border-radius:5px"></div>
<div style="left:1461px;top:542px;width:10px;height:24px;background:#787878;border-radius:5px"></div>
<svg style="left:1461px;top:630px" width="10" height="9" viewBox="0 0 10 9"><path d="M1 1 L5 8 L9 1 Z" fill="#8a8a8a"/></svg>
<svg style="left:219px;top:647px" width="9" height="10" viewBox="0 0 9 10"><path d="M8 1 L1 5 L8 9 Z" fill="#8a8a8a"/></svg>
<div style="left:232px;top:647px;width:1209px;height:10px;background:#414141;border-radius:5px"></div>
<div style="left:232px;top:647px;width:745px;height:10px;background:#787878;border-radius:5px"></div>
<svg style="left:1444px;top:647px" width="9" height="10" viewBox="0 0 9 10"><path d="M1 1 L8 5 L1 9 Z" fill="#8a8a8a"/></svg>
<div style="left:0px;top:662px;width:1476px;height:1px;background:#5a5a5a;"></div>
<div style="left:1476px;top:101px;width:1px;height:612px;background:#5a5a5a;"></div>
<div style="left:1477px;top:103px;width:442px;height:23px;border:1px solid #808080;border-radius:3px;box-sizing:border-box"></div>
<div class="m" style="left:1671px;top:110px;color:#e8e8e8;">Hide FPU</div>
<div style="left:1477px;top:127px;width:420px;height:433px;overflow:hidden">
<div class="m" style="left:7px;top:6px;color:#a890f0">RAX</div>
<div class="m" style="left:50px;top:6px;color:#e6e6e6">0000016DAABC0000</div>
<div class="m" style="left:7px;top:18px;color:#a890f0">RBX</div>
<div class="m" style="left:50px;top:18px;color:#e6e6e6">0000000000000000</div>
<div class="m" style="left:7px;top:30px;color:#a890f0">RCX</div>
<div class="m" style="left:50px;top:30px;color:#e6e6e6">0000016DAABC0000</div>
<div class="m" style="left:7px;top:42px;color:#a890f0">RDX</div>
<div class="m" style="left:50px;top:42px;color:#e6e6e6">00007FFB8E141E40</div>
<div class="m" style="left:197px;top:42px;color:#f0607a">&lt;ntdll.ZwFreeVirtualMemory&gt;</div>
<div class="m" style="left:7px;top:54px;color:#a890f0">RBP</div>
<div class="m" style="left:50px;top:54px;color:#e6e6e6">000000156DAFF8C0</div>
<div class="m" style="left:7px;top:66px;color:#a890f0">RSP</div>
<div class="m" style="left:50px;top:66px;color:#e6e6e6">000000156DAFF7F0</div>
<div class="m" style="left:7px;top:78px;color:#a890f0">RSI</div>
<div class="m" style="left:50px;top:78px;color:#e6e6e6">0000000000000000</div>
<div class="m" style="left:7px;top:90px;color:#a890f0">RDI</div>
<div class="m" style="left:50px;top:90px;color:#e6e6e6">0000000000000000</div>
<div class="m" style="left:7px;top:114px;color:#a890f0">R8</div>
<div class="m" style="left:50px;top:114px;color:#e6e6e6">00007FFB8E06C4D0</div>
<div class="m" style="left:197px;top:114px;color:#f0607a">&lt;ntdll.RtlExitUserThread&gt;</div>
<div class="m" style="left:7px;top:126px;color:#a890f0">R9</div>
<div class="m" style="left:50px;top:126px;color:#e6e6e6">00007FFB8E142480</div>
<div class="m" style="left:197px;top:126px;color:#f0607a">&lt;ntdll.ZwProtectVirtualMemory&gt;</div>
<div class="m" style="left:7px;top:138px;color:#a890f0">R10</div>
<div class="m" style="left:50px;top:138px;color:#e6e6e6">FD3F5C0A9FD47967</div>
<div class="m" style="left:7px;top:150px;color:#a890f0">R11</div>
<div class="m" style="left:50px;top:150px;color:#e6e6e6">000000000000000B</div>
<div class="m" style="left:7px;top:162px;color:#a890f0">R12</div>
<div class="m" style="left:50px;top:162px;color:#e6e6e6">0000016DAABC0000</div>
<div class="m" style="left:7px;top:174px;color:#a890f0">R13</div>
<div class="m" style="left:50px;top:174px;color:#e6e6e6">00007FFB8E141E40</div>
<div class="m" style="left:197px;top:174px;color:#f0607a">&lt;ntdll.ZwFreeVirtualMemory&gt;</div>
<div class="m" style="left:7px;top:186px;color:#a890f0">R14</div>
<div class="m" style="left:50px;top:186px;color:#e6e6e6">00007FFB8E06C4D0</div>
<div class="m" style="left:197px;top:186px;color:#f0607a">&lt;ntdll.RtlExitUserThread&gt;</div>
<div class="m" style="left:7px;top:198px;color:#a890f0">R15</div>
<div class="m" style="left:50px;top:198px;color:#e6e6e6">00007FFB8E142480</div>
<div class="m" style="left:197px;top:198px;color:#f0607a">&lt;ntdll.ZwProtectVirtualMemory&gt;</div>
<div class="m" style="left:7px;top:222px;color:#a890f0">RIP</div>
<div class="m" style="left:50px;top:222px;color:#f07860">0000016DAABC6FDA</div>
<div class="m" style="left:7px;top:246px;color:#a890f0">RFLAGS</div>
<div class="m" style="left:71px;top:246px;color:#e6e6e6">0000000000000206</div>
<div class="m" style="left:7px;top:258px;color:#a890f0">ZF</div>
<div class="m" style="left:29px;top:258px;color:#e6e6e6">0</div>
<div class="m" style="left:50px;top:258px;color:#a890f0">PF</div>
<div class="m" style="left:71px;top:258px;color:#e6e6e6">1</div>
<div class="m" style="left:92px;top:258px;color:#a890f0">AF</div>
<div class="m" style="left:113px;top:258px;color:#e6e6e6">0</div>
<div class="m" style="left:7px;top:270px;color:#a890f0">OF</div>
<div class="m" style="left:29px;top:270px;color:#e6e6e6">0</div>
<div class="m" style="left:50px;top:270px;color:#a890f0">SF</div>
<div class="m" style="left:71px;top:270px;color:#e6e6e6">0</div>
<div class="m" style="left:92px;top:270px;color:#a890f0">DF</div>
<div class="m" style="left:113px;top:270px;color:#e6e6e6">0</div>
<div class="m" style="left:7px;top:282px;color:#a890f0">CF</div>
<div class="m" style="left:29px;top:282px;color:#e6e6e6">0</div>
<div class="m" style="left:50px;top:282px;color:#a890f0">TF</div>
<div class="m" style="left:71px;top:282px;color:#e6e6e6">0</div>
<div class="m" style="left:92px;top:282px;color:#a890f0">IF</div>
<div class="m" style="left:113px;top:282px;color:#e6e6e6">1</div>
<div class="m" style="left:7px;top:306px;color:#a890f0">LastError</div>
<div class="m" style="left:85px;top:306px;color:#e6e6e6">00000000 (ERROR_SUCCESS)</div>
<div class="m" style="left:7px;top:318px;color:#a890f0">LastStatus</div>
<div class="m" style="left:85px;top:318px;color:#e6e6e6">C0000034 (STATUS_OBJECT_NAME_NOT_FOUND)</div>
<div class="m" style="left:7px;top:342px;color:#a890f0">GS</div>
<div class="m" style="left:29px;top:342px;color:#e6e6e6">002B</div>
<div class="m" style="left:71px;top:342px;color:#a890f0">FS</div>
<div class="m" style="left:92px;top:342px;color:#e6e6e6">0053</div>
<div class="m" style="left:7px;top:354px;color:#a890f0">ES</div>
<div class="m" style="left:29px;top:354px;color:#e6e6e6">002B</div>
<div class="m" style="left:71px;top:354px;color:#a890f0">DS</div>
<div class="m" style="left:92px;top:354px;color:#e6e6e6">002B</div>
<div class="m" style="left:7px;top:366px;color:#a890f0">CS</div>
<div class="m" style="left:29px;top:366px;color:#e6e6e6">0033</div>
<div class="m" style="left:71px;top:366px;color:#a890f0">SS</div>
<div class="m" style="left:92px;top:366px;color:#e6e6e6">002B</div>
<div class="m" style="left:7px;top:390px;color:#a890f0">ST(0)</div>
<div class="m" style="left:50px;top:390px;color:#e6e6e6">E9500000000000000000</div>
<div class="m" style="left:197px;top:390px;color:#f0607a">x87r0 Empty invalid</div>
<div class="m" style="left:7px;top:402px;color:#a890f0">ST(1)</div>
<div class="m" style="left:50px;top:402px;color:#e6e6e6">709C00007FFB8ABDB730</div>
<div class="m" style="left:197px;top:402px;color:#f0607a">x87r1 Empty invalid</div>
<div class="m" style="left:7px;top:414px;color:#a890f0">ST(2)</div>
<div class="m" style="left:50px;top:414px;color:#e6e6e6">F480000000156DAFF608</div>
<div class="m" style="left:197px;top:414px;color:#f0607a">x87r2 Empty invalid</div>
<div class="m" style="left:7px;top:426px;color:#a890f0">ST(3)</div>
<div class="m" style="left:50px;top:426px;color:#e6e6e6">00000000000000000002</div>
<div class="m" style="left:197px;top:426px;color:#f0607a">x87r3 Empty 7.290399063764949205</div>
</div>
<div style="left:1484px;top:189px;width:21px;height:1px;background:#9ae030;"></div>
<div style="left:1547px;top:501px;width:14px;height:1px;background:#9ae030;"></div>
<svg style="left:1905px;top:130px" width="10" height="8" viewBox="0 0 10 8"><path d="M1 7 L5 1 L9 7 Z" fill="#8a8a8a"/></svg>
<div style="left:1905px;top:142px;width:10px;height:401px;background:#414141;border-radius:5px"></div>
<div style="left:1905px;top:142px;width:10px;height:161px;background:#787878;border-radius:5px"></div>
<svg style="left:1905px;top:548px" width="10" height="8" viewBox="0 0 10 8"><path d="M1 1 L5 7 L9 1 Z" fill="#8a8a8a"/></svg>
<svg style="left:1481px;top:564px" width="8" height="10" viewBox="0 0 8 10"><path d="M7 1 L1 5 L7 9 Z" fill="#8a8a8a"/></svg>
<div style="left:1492px;top:564px;width:393px;height:10px;background:#414141;border-radius:5px"></div>
<div style="left:1492px;top:564px;width:167px;height:10px;background:#787878;border-radius:5px"></div>
<svg style="left:1889px;top:564px" width="8" height="10" viewBox="0 0 8 10"><path d="M1 1 L7 5 L1 9 Z" fill="#8a8a8a"/></svg>
<div style="left:1476px;top:578px;width:444px;height:1px;background:#5a5a5a;"></div>
<div style="left:1477px;top:580px;width:268px;height:26px;background:#262626;border:1px solid #1a1a1a;border-radius:2px;box-sizing:border-box"></div>
<div class="s" style="left:1482.5px;top:585px;color:#e8e8e8;font-size:11px;"><span style="display:inline-block;transform:scaleX(1.0023);transform-origin:0 0">Default (x64 fastcall)</span></div>
<svg style="left:1733px;top:590px" width="9" height="6" viewBox="0 0 9 6"><path d="M1 1 L4.5 5 L8 1 Z" fill="#aaa"/></svg>
<div style="left:1749px;top:580px;width:101px;height:26px;background:#262626;border-radius:2px"></div>
<svg style="left:1756px;top:590px" width="9" height="6" viewBox="0 0 9 6"><path d="M1 1 L4.5 5 L8 1 Z" fill="#aaa"/></svg>
<div class="s" style="left:1772px;top:586px;color:#e8e8e8;font-size:11px;"><span style="display:inline-block;transform:scaleX(0.9796);transform-origin:0 0">5</span></div>
<svg style="left:1837px;top:590px" width="9" height="6" viewBox="0 0 9 6"><path d="M1 5 L4.5 1 L8 5 Z" fill="#aaa"/></svg>
<div style="left:1854px;top:585px;width:16px;height:16px;border:1px solid #6a6a6a;border-radius:3px;box-sizing:border-box"></div>
<div class="s" style="left:1875.5px;top:586px;color:#e8e8e8;font-size:11px;"><span style="display:inline-block;transform:scaleX(0.9704);transform-origin:0 0">Unlocked</span></div>
<div style="left:1478px;top:608px;width:421px;height:11px;background:#3f3f3f;"></div>
<div class="m" style="left:1482.5px;top:609px;color:#e6e6e6;width:417px;overflow:hidden">1: rcx 0000016DAABC0000 0000016DAABC0000</div>
<div class="m" style="left:1482.5px;top:620px;color:#e6e6e6;width:417px;overflow:hidden">2: rdx 00007FFB8E141E40 &lt;ntdll.ZwFreeVirtualMemory&gt; (00007FFB8E141E40)</div>
<div class="m" style="left:1482.5px;top:631px;color:#e6e6e6;width:417px;overflow:hidden">3: r8 00007FFB8E06C4D0 &lt;ntdll.RtlExitUserThread&gt; (00007FFB8E06C4D0)</div>
<div class="m" style="left:1482.5px;top:642px;color:#e6e6e6;width:417px;overflow:hidden">4: r9 00007FFB8E142480 &lt;ntdll.ZwProtectVirtualMemory&gt; (00007FFB8E142480)</div>
<div class="m" style="left:1482.5px;top:653px;color:#e6e6e6;width:417px;overflow:hidden">5: [rsp+28] 0000000000000000 0000000000000000</div>
<svg style="left:1905px;top:612px" width="9" height="8" viewBox="0 0 9 8"><path d="M1 7 L4.5 1 L8 7 Z" fill="#8a8a8a"/></svg>
<div style="left:1904px;top:624px;width:11px;height:71px;background:#787878;border-radius:5px"></div>
<svg style="left:1905px;top:700px" width="9" height="8" viewBox="0 0 9 8"><path d="M1 1 L4.5 7 L8 1 Z" fill="#8a8a8a"/></svg>
<div style="left:0px;top:713px;width:1920px;height:1px;background:#5a5a5a;"></div>
<div class="m" style="left:6.5px;top:664.5px;color:#e6e6e6;">byte ptr ss:[rbp-3C]=[000000156DAFF884]=0</div>
<div class="m" style="left:6.5px;top:675.5px;color:#e6e6e6;">FF 'ÿ'</div>
<div class="m" style="left:6.5px;top:697.5px;color:#e6e6e6;">0000016DAABC6FDA</div>
<div style="left:2px;top:715px;width:88px;height:24px;background:#3c3c3c;border-radius:2px 2px 0 0"></div>
<div style="left:2px;top:739px;width:88px;height:2px;background:#7c9cf8;"></div>
<svg style="left:11px;top:717px" width="17" height="17" viewBox="0 0 17 17"><defs><radialGradient id="gk" cx="40%" cy="40%" r="70%"><stop offset="0" stop-color="#e8a860"/><stop offset="1" stop-color="#8a5020"/></radialGradient></defs><circle cx="8.5" cy="4.8" r="2.4" fill="#c83a10"/><circle cx="4.8" cy="7" r="3.6" fill="#e0b828"/><circle cx="4.2" cy="6.2" r="1.5" fill="#fff4c0"/><ellipse cx="11.8" cy="7.2" rx="2.8" ry="3.2" fill="#3080e0"/><circle cx="11.5" cy="6.8" r="1.1" fill="#d0ecff"/><path d="M3.2 8.5 Q4 0.8 8.5 0.8 Q13 0.8 13.8 8.5" fill="none" stroke="#b87838" stroke-width="1.3"/><path d="M0.6 8.3 Q8.5 6.8 16.4 8.3 Q16.5 14 12.5 16 Q8.5 17.3 4.5 16 Q0.5 14 0.6 8.3 Z" fill="url(#gk)"/><path d="M1 10.5 Q8.5 9.5 16 10.5 M1.6 13 Q8.5 12 15.4 13" stroke="#7a4818" stroke-width=".6" fill="none" opacity=".7"/></svg>
<div class="s" style="left:37px;top:721px;color:#8ca4f8;font-size:11px;"><span style="display:inline-block;transform:scaleX(0.9473);transform-origin:0 0">Dump 1</span></div>
<div style="left:92px;top:715px;width:88px;height:24px;background:#313131;border-radius:2px 2px 0 0"></div>
<svg style="left:101px;top:717px" width="17" height="17" viewBox="0 0 17 17"><defs><radialGradient id="gk" cx="40%" cy="40%" r="70%"><stop offset="0" stop-color="#e8a860"/><stop offset="1" stop-color="#8a5020"/></radialGradient></defs><circle cx="8.5" cy="4.8" r="2.4" fill="#c83a10"/><circle cx="4.8" cy="7" r="3.6" fill="#e0b828"/><circle cx="4.2" cy="6.2" r="1.5" fill="#fff4c0"/><ellipse cx="11.8" cy="7.2" rx="2.8" ry="3.2" fill="#3080e0"/><circle cx="11.5" cy="6.8" r="1.1" fill="#d0ecff"/><path d="M3.2 8.5 Q4 0.8 8.5 0.8 Q13 0.8 13.8 8.5" fill="none" stroke="#b87838" stroke-width="1.3"/><path d="M0.6 8.3 Q8.5 6.8 16.4 8.3 Q16.5 14 12.5 16 Q8.5 17.3 4.5 16 Q0.5 14 0.6 8.3 Z" fill="url(#gk)"/><path d="M1 10.5 Q8.5 9.5 16 10.5 M1.6 13 Q8.5 12 15.4 13" stroke="#7a4818" stroke-width=".6" fill="none" opacity=".7"/></svg>
<div class="s" style="left:127px;top:721px;color:#e4e4e4;font-size:11px;"><span style="display:inline-block;transform:scaleX(0.9473);transform-origin:0 0">Dump 2</span></div>
<div style="left:182px;top:715px;width:88px;height:24px;background:#313131;border-radius:2px 2px 0 0"></div>
<svg style="left:191px;top:717px" width="17" height="17" viewBox="0 0 17 17"><defs><radialGradient id="gk" cx="40%" cy="40%" r="70%"><stop offset="0" stop-color="#e8a860"/><stop offset="1" stop-color="#8a5020"/></radialGradient></defs><circle cx="8.5" cy="4.8" r="2.4" fill="#c83a10"/><circle cx="4.8" cy="7" r="3.6" fill="#e0b828"/><circle cx="4.2" cy="6.2" r="1.5" fill="#fff4c0"/><ellipse cx="11.8" cy="7.2" rx="2.8" ry="3.2" fill="#3080e0"/><circle cx="11.5" cy="6.8" r="1.1" fill="#d0ecff"/><path d="M3.2 8.5 Q4 0.8 8.5 0.8 Q13 0.8 13.8 8.5" fill="none" stroke="#b87838" stroke-width="1.3"/><path d="M0.6 8.3 Q8.5 6.8 16.4 8.3 Q16.5 14 12.5 16 Q8.5 17.3 4.5 16 Q0.5 14 0.6 8.3 Z" fill="url(#gk)"/><path d="M1 10.5 Q8.5 9.5 16 10.5 M1.6 13 Q8.5 12 15.4 13" stroke="#7a4818" stroke-width=".6" fill="none" opacity=".7"/></svg>
<div class="s" style="left:217px;top:721px;color:#e4e4e4;font-size:11px;"><span style="display:inline-block;transform:scaleX(0.9473);transform-origin:0 0">Dump 3</span></div>
<div style="left:272px;top:715px;width:88px;height:24px;background:#313131;border-radius:2px 2px 0 0"></div>
<svg style="left:281px;top:717px" width="17" height="17" viewBox="0 0 17 17"><defs><radialGradient id="gk" cx="40%" cy="40%" r="70%"><stop offset="0" stop-color="#e8a860"/><stop offset="1" stop-color="#8a5020"/></radialGradient></defs><circle cx="8.5" cy="4.8" r="2.4" fill="#c83a10"/><circle cx="4.8" cy="7" r="3.6" fill="#e0b828"/><circle cx="4.2" cy="6.2" r="1.5" fill="#fff4c0"/><ellipse cx="11.8" cy="7.2" rx="2.8" ry="3.2" fill="#3080e0"/><circle cx="11.5" cy="6.8" r="1.1" fill="#d0ecff"/><path d="M3.2 8.5 Q4 0.8 8.5 0.8 Q13 0.8 13.8 8.5" fill="none" stroke="#b87838" stroke-width="1.3"/><path d="M0.6 8.3 Q8.5 6.8 16.4 8.3 Q16.5 14 12.5 16 Q8.5 17.3 4.5 16 Q0.5 14 0.6 8.3 Z" fill="url(#gk)"/><path d="M1 10.5 Q8.5 9.5 16 10.5 M1.6 13 Q8.5 12 15.4 13" stroke="#7a4818" stroke-width=".6" fill="none" opacity=".7"/></svg>
<div class="s" style="left:307px;top:721px;color:#e4e4e4;font-size:11px;"><span style="display:inline-block;transform:scaleX(0.9473);transform-origin:0 0">Dump 4</span></div>
<div style="left:362px;top:715px;width:88px;height:24px;background:#313131;border-radius:2px 2px 0 0"></div>
<svg style="left:371px;top:717px" width="17" height="17" viewBox="0 0 17 17"><defs><radialGradient id="gk" cx="40%" cy="40%" r="70%"><stop offset="0" stop-color="#e8a860"/><stop offset="1" stop-color="#8a5020"/></radialGradient></defs><circle cx="8.5" cy="4.8" r="2.4" fill="#c83a10"/><circle cx="4.8" cy="7" r="3.6" fill="#e0b828"/><circle cx="4.2" cy="6.2" r="1.5" fill="#fff4c0"/><ellipse cx="11.8" cy="7.2" rx="2.8" ry="3.2" fill="#3080e0"/><circle cx="11.5" cy="6.8" r="1.1" fill="#d0ecff"/><path d="M3.2 8.5 Q4 0.8 8.5 0.8 Q13 0.8 13.8 8.5" fill="none" stroke="#b87838" stroke-width="1.3"/><path d="M0.6 8.3 Q8.5 6.8 16.4 8.3 Q16.5 14 12.5 16 Q8.5 17.3 4.5 16 Q0.5 14 0.6 8.3 Z" fill="url(#gk)"/><path d="M1 10.5 Q8.5 9.5 16 10.5 M1.6 13 Q8.5 12 15.4 13" stroke="#7a4818" stroke-width=".6" fill="none" opacity=".7"/></svg>
<div class="s" style="left:397px;top:721px;color:#e4e4e4;font-size:11px;"><span style="display:inline-block;transform:scaleX(0.9473);transform-origin:0 0">Dump 5</span></div>
<div style="left:452px;top:715px;width:92px;height:24px;background:#313131;border-radius:2px 2px 0 0"></div>
<svg style="left:462px;top:717px" width="16" height="17" viewBox="0 0 16 17"><defs><clipPath id="ce"><ellipse cx="8" cy="9.5" rx="4.3" ry="6"/></clipPath></defs><g clip-path="url(#ce)"><rect x="0" y="0" width="16" height="17" fill="#c0e4e4"/><rect x="0" y="0" width="16" height="5.5" fill="#7a3810"/><rect x="0" y="5" width="16" height="1.6" fill="#e0a030"/><rect x="0" y="12.8" width="16" height="1.5" fill="#b06878"/><rect x="0" y="14" width="16" height="4" fill="#5a1808"/></g><circle cx="8" cy="9.3" r="2.6" fill="#f0b020"/><circle cx="8" cy="9" r="1.4" fill="#f06010"/></svg>
<div class="s" style="left:487px;top:721px;color:#e4e4e4;font-size:11px;"><span style="display:inline-block;transform:scaleX(1.0012);transform-origin:0 0">Watch 1</span></div>
<div style="left:546px;top:715px;width:81px;height:24px;background:#313131;border-radius:2px 2px 0 0"></div>
<svg style="left:556px;top:717px" width="16" height="17" viewBox="0 0 16 17"><path d="M1.5 3 Q3 2 5.5 4 L7.5 8 L6.5 8.5 Q3 6 1.5 3 Z" fill="#e8dcb0" stroke="#3a3020" stroke-width=".5"/><path d="M14.5 3 Q13 2 10.5 4 L8.5 8 L9.5 8.5 Q13 6 14.5 3 Z" fill="#e8dcb0" stroke="#3a3020" stroke-width=".5"/><ellipse cx="8" cy="10" rx="2.6" ry="2.4" fill="#e4d8b8"/><ellipse cx="8" cy="10.5" rx="1.2" ry="1" fill="#b8b0a0"/><ellipse cx="8" cy="14" rx="3.2" ry="2.4" fill="#f0e6c8"/><rect x="5.5" y="15.5" width="5" height="1.2" fill="#6a4010"/><circle cx="4.8" cy="14.2" r="1" fill="#f0a060"/><circle cx="11.2" cy="14" r="1" fill="#e0a020"/><circle cx="12.6" cy="14.6" r=".8" fill="#60a0a0"/></svg>
<div class="s" style="left:581px;top:721px;color:#e4e4e4;font-size:11px;"><span style="display:inline-block;transform:scaleX(0.9435);transform-origin:0 0">Locals</span></div>
<div style="left:629px;top:715px;width:81px;height:24px;background:#313131;border-radius:2px 2px 0 0"></div>
<svg style="left:639px;top:717px" width="16" height="17" viewBox="0 0 16 17"><ellipse cx="8" cy="9" rx="5.2" ry="6.8" fill="#b8207a"/><path d="M4.5 4.5 Q8 3 11.5 4.5" stroke="#f0a8d8" stroke-width="1" fill="none"/><path d="M3.2 8 L5 7 L7 8 L9 6.5 L11 8 L12.8 7.5 L12.8 12 L3.2 12 Z" fill="#f4c0e0"/><circle cx="6.5" cy="9.8" r="1" fill="#c84a98"/><circle cx="10" cy="10.2" r="1" fill="#d05aa0"/><path d="M5 14.5 Q8 15.5 11 14.5" stroke="#e8a0c8" stroke-width=".9" fill="none"/></svg>
<div class="s" style="left:664px;top:721px;color:#e4e4e4;font-size:11px;"><span style="display:inline-block;transform:scaleX(1.0440);transform-origin:0 0">Struct</span></div>
<div style="left:2px;top:742px;width:1159px;height:234px;background:#0c0c0c;"></div>
<div style="left:3px;top:743px;width:1157px;height:232px;background:#212121;"></div>
<div style="left:3px;top:743px;width:1137px;height:13px;background:#3c3c3c;"></div>
<div style="left:3px;top:756px;width:1139px;height:2px;background:#6a6a6a;"></div>
<div style="left:1140px;top:743px;width:2px;height:232px;background:#6a6a6a;"></div>
<div style="left:122px;top:743px;width:1.5px;height:13px;background:#5a5a5a;"></div>
<div style="left:459px;top:743px;width:1.5px;height:13px;background:#5a5a5a;"></div>
<div style="left:579px;top:743px;width:1.5px;height:13px;background:#5a5a5a;"></div>
<div class="m" style="left:7.5px;top:746px;color:#e0e0e0;">Address</div>
<div class="m" style="left:127.5px;top:746px;color:#e0e0e0;">Hex</div>
<div class="m" style="left:464.5px;top:746px;color:#e0e0e0;">ASCII</div>
<div style="left:122px;top:758px;width:1px;height:216px;background:#5e5e5e;"></div>
<div style="left:207px;top:758px;width:1px;height:216px;background:#5e5e5e;"></div>
<div style="left:291px;top:758px;width:1px;height:216px;background:#5e5e5e;"></div>
<div style="left:375px;top:758px;width:1px;height:216px;background:#5e5e5e;"></div>
<div style="left:459px;top:758px;width:1px;height:216px;background:#5e5e5e;"></div>
<div style="left:579px;top:758px;width:1px;height:216px;background:#5e5e5e;"></div>
<div style="left:293px;top:813px;width:166px;height:1.5px;background:#787878;"></div>
<div style="left:293px;top:813px;width:21px;height:1.5px;background:#1a2af0;"></div>
<div style="left:125px;top:835px;width:169px;height:1.5px;background:#787878;"></div>
<div style="left:125px;top:835px;width:21px;height:1.5px;background:#1a2af0;"></div>
<div style="left:293px;top:846px;width:166px;height:1.5px;background:#787878;"></div>
<div style="left:293px;top:846px;width:21px;height:1.5px;background:#8ca0f8;"></div>
<div style="left:293px;top:868px;width:166px;height:1.5px;background:#787878;"></div>
<div style="left:293px;top:868px;width:21px;height:1.5px;background:#1a2af0;"></div>
<div style="left:125px;top:901px;width:169px;height:1.5px;background:#787878;"></div>
<div style="left:125px;top:901px;width:21px;height:1.5px;background:#8ca0f8;"></div>
<div style="left:125px;top:912px;width:169px;height:1.5px;background:#787878;"></div>
<div style="left:125px;top:912px;width:21px;height:1.5px;background:#8ca0f8;"></div>
<div style="left:293px;top:934px;width:166px;height:1.5px;background:#787878;"></div>
<div style="left:293px;top:934px;width:21px;height:1.5px;background:#8ca0f8;"></div>
<div style="left:125px;top:945px;width:169px;height:1.5px;background:#787878;"></div>
<div style="left:125px;top:945px;width:21px;height:1.5px;background:#8ca0f8;"></div>
<div style="left:125px;top:956px;width:169px;height:1.5px;background:#787878;"></div>
<div style="left:125px;top:956px;width:21px;height:1.5px;background:#8ca0f8;"></div>
<div style="left:293px;top:956px;width:166px;height:1.5px;background:#787878;"></div>
<div style="left:293px;top:956px;width:21px;height:1.5px;background:#8ca0f8;"></div>
<div style="left:125px;top:967px;width:169px;height:1.5px;background:#787878;"></div>
<div style="left:125px;top:967px;width:21px;height:1.5px;background:#f04040;"></div>
<div style="left:123px;top:758.5px;width:21px;height:11px;background:#3c3c3c;"></div>
<div style="left:464px;top:758.5px;width:7px;height:11px;background:#3c3c3c;"></div>
<div class="m" style="left:7.5px;top:759px;color:#b0aca4;">000000156DAFF880</div>
<div class="m" style="left:127.5px;top:759px;color:#e6e6e6;">48 31 C9 41</div>
<div class="m" style="left:211.5px;top:759px;color:#e6e6e6;">00 00 00 00</div>
<div class="m" style="left:295.5px;top:759px;color:#e6e6e6;">00 00 00 00</div>
<div class="m" style="left:379.5px;top:759px;color:#e6e6e6;">00 00 00 00</div>
<div class="m" style="left:464.5px;top:759px;color:#e0e0e0;">H1ÉA............</div>
<div class="m" style="left:7.5px;top:770px;color:#b0aca4;">000000156DAFF890</div>
<div class="m" style="left:127.5px;top:770px;color:#e6e6e6;">00 00 00 00</div>
<div class="m" style="left:211.5px;top:770px;color:#e6e6e6;">00 00 00 00</div>
<div class="m" style="left:295.5px;top:770px;color:#e6e6e6;">00 00 00 00</div>
<div class="m" style="left:379.5px;top:770px;color:#e6e6e6;">00 00 00 00</div>
<div class="m" style="left:464.5px;top:770px;color:#e0e0e0;">................</div>
<div class="m" style="left:7.5px;top:781px;color:#b0aca4;">000000156DAFF8A0</div>
<div class="m" style="left:127.5px;top:781px;color:#e6e6e6;">00 00 00 00</div>
<div class="m" style="left:211.5px;top:781px;color:#e6e6e6;">00 00 00 00</div>
<div class="m" style="left:295.5px;top:781px;color:#e6e6e6;">00 00 00 00</div>
<div class="m" style="left:379.5px;top:781px;color:#e6e6e6;">00 00 00 00</div>
<div class="m" style="left:464.5px;top:781px;color:#e0e0e0;">................</div>
<div class="m" style="left:7.5px;top:792px;color:#b0aca4;">000000156DAFF8B0</div>
<div class="m" style="left:127.5px;top:792px;color:#e6e6e6;">00 00 00 00</div>
<div class="m" style="left:211.5px;top:792px;color:#e6e6e6;">00 00 00 00</div>
<div class="m" style="left:295.5px;top:792px;color:#e6e6e6;">00 00 00 00</div>
<div class="m" style="left:379.5px;top:792px;color:#e6e6e6;">00 00 00 00</div>
<div class="m" style="left:464.5px;top:792px;color:#e0e0e0;">................</div>
<div class="m" style="left:7.5px;top:803px;color:#b0aca4;">000000156DAFF8C0</div>
<div class="m" style="left:127.5px;top:803px;color:#e6e6e6;">00 00 00 00</div>
<div class="m" style="left:211.5px;top:803px;color:#e6e6e6;">00 00 00 00</div>
<div class="m" style="left:295.5px;top:803px;color:#e6e6e6;">9C 28 BC AA</div>
<div class="m" style="left:379.5px;top:803px;color:#e6e6e6;">6D 01 00 00</div>
<div class="m" style="left:464.5px;top:803px;color:#e0e0e0;">.........(¼ªm...</div>
<div class="m" style="left:7.5px;top:814px;color:#b0aca4;">000000156DAFF8D0</div>
<div class="m" style="left:127.5px;top:814px;color:#e6e6e6;">00 00 00 00</div>
<div class="m" style="left:211.5px;top:814px;color:#e6e6e6;">6D 01 00 00</div>
<div class="m" style="left:295.5px;top:814px;color:#e6e6e6;">00 00 00 00</div>
<div class="m" style="left:379.5px;top:814px;color:#e6e6e6;">00 00 00 00</div>
<div class="m" style="left:464.5px;top:814px;color:#e0e0e0;">....m...........</div>
<div class="m" style="left:7.5px;top:825px;color:#b0aca4;">000000156DAFF8E0</div>
<div class="m" style="left:127.5px;top:825px;color:#e6e6e6;">70 6A BC AA</div>
<div class="m" style="left:211.5px;top:825px;color:#e6e6e6;">6D 01 00 00</div>
<div class="m" style="left:295.5px;top:825px;color:#e6e6e6;">32 05 00 00</div>
<div class="m" style="left:379.5px;top:825px;color:#e6e6e6;">00 00 00 00</div>
<div class="m" style="left:464.5px;top:825px;color:#e0e0e0;">pj¼ªm...2.......</div>
<div class="m" style="left:7.5px;top:836px;color:#b0aca4;">000000156DAFF8F0</div>
<div class="m" style="left:127.5px;top:836px;color:#e6e6e6;">00 04 00 00</div>
<div class="m" style="left:211.5px;top:836px;color:#e6e6e6;">00 00 00 00</div>
<div class="m" style="left:295.5px;top:836px;color:#e6e6e6;">08 FA AF 6D</div>
<div class="m" style="left:379.5px;top:836px;color:#e6e6e6;">15 00 00 00</div>
<div class="m" style="left:464.5px;top:836px;color:#e0e0e0;">.........ú¯m....</div>
<div class="m" style="left:7.5px;top:847px;color:#b0aca4;">000000156DAFF900</div>
<div class="m" style="left:127.5px;top:847px;color:#e6e6e6;">00 00 00 00</div>
<div class="m" style="left:211.5px;top:847px;color:#e6e6e6;">00 00 00 00</div>
<div class="m" style="left:295.5px;top:847px;color:#e6e6e6;">00 00 00 00</div>
<div class="m" style="left:379.5px;top:847px;color:#e6e6e6;">00 00 00 00</div>
<div class="m" style="left:464.5px;top:847px;color:#e0e0e0;">................</div>
<div class="m" style="left:7.5px;top:858px;color:#b0aca4;">000000156DAFF910</div>
<div class="m" style="left:127.5px;top:858px;color:#e6e6e6;">05 00 00 00</div>
<div class="m" style="left:211.5px;top:858px;color:#e6e6e6;">00 00 00 00</div>
<div class="m" style="left:295.5px;top:858px;color:#e6e6e6;">00 00 BC AA</div>
<div class="m" style="left:379.5px;top:858px;color:#e6e6e6;">6D 01 00 00</div>
<div class="m" style="left:464.5px;top:858px;color:#e0e0e0;">..........¼ªm...</div>
<div class="m" style="left:7.5px;top:869px;color:#b0aca4;">000000156DAFF920</div>
<div class="m" style="left:127.5px;top:869px;color:#e6e6e6;">05 00 00 00</div>
<div class="m" style="left:211.5px;top:869px;color:#e6e6e6;">00 00 00 00</div>
<div class="m" style="left:295.5px;top:869px;color:#e6e6e6;">00 04 00 00</div>
<div class="m" style="left:379.5px;top:869px;color:#e6e6e6;">06 00 00 00</div>
<div class="m" style="left:464.5px;top:869px;color:#e0e0e0;">................</div>
<div class="m" style="left:7.5px;top:880px;color:#b0aca4;">000000156DAFF930</div>
<div class="m" style="left:127.5px;top:880px;color:#e6e6e6;">00 00 00 00</div>
<div class="m" style="left:211.5px;top:880px;color:#e6e6e6;">00 00 00 00</div>
<div class="m" style="left:295.5px;top:880px;color:#e6e6e6;">48 00 00 00</div>
<div class="m" style="left:379.5px;top:880px;color:#e6e6e6;">FF FF 00 00</div>
<div class="m" style="left:464.5px;top:880px;color:#e0e0e0;">........H...ÿÿ..</div>
<div class="m" style="left:7.5px;top:891px;color:#b0aca4;">000000156DAFF940</div>
<div class="m" style="left:127.5px;top:891px;color:#e6e6e6;">18 01 00 80</div>
<div class="m" style="left:211.5px;top:891px;color:#e6e6e6;">01 00 00 00</div>
<div class="m" style="left:295.5px;top:891px;color:#e6e6e6;">00 00 00 00</div>
<div class="m" style="left:379.5px;top:891px;color:#e6e6e6;">00 00 00 00</div>
<div class="m" style="left:464.5px;top:891px;color:#e0e0e0;">................</div>
<div class="m" style="left:7.5px;top:902px;color:#b0aca4;">000000156DAFF950</div>
<div class="m" style="left:127.5px;top:902px;color:#e6e6e6;">14 7F 01 80</div>
<div class="m" style="left:211.5px;top:902px;color:#e6e6e6;">01 00 00 00</div>
<div class="m" style="left:295.5px;top:902px;color:#e6e6e6;">09 00 00 00</div>
<div class="m" style="left:379.5px;top:902px;color:#e6e6e6;">00 00 00 00</div>
<div class="m" style="left:464.5px;top:902px;color:#e0e0e0;">................</div>
<div class="m" style="left:7.5px;top:913px;color:#b0aca4;">000000156DAFF960</div>
<div class="m" style="left:127.5px;top:913px;color:#e6e6e6;">00 00 00 00</div>
<div class="m" style="left:211.5px;top:913px;color:#e6e6e6;">00 00 00 00</div>
<div class="m" style="left:295.5px;top:913px;color:#e6e6e6;">00 00 00 00</div>
<div class="m" style="left:379.5px;top:913px;color:#e6e6e6;">00 00 00 00</div>
<div class="m" style="left:464.5px;top:913px;color:#e0e0e0;">................</div>
<div class="m" style="left:7.5px;top:924px;color:#b0aca4;">000000156DAFF970</div>
<div class="m" style="left:127.5px;top:924px;color:#e6e6e6;">00 00 00 00</div>
<div class="m" style="left:211.5px;top:924px;color:#e6e6e6;">00 00 00 00</div>
<div class="m" style="left:295.5px;top:924px;color:#e6e6e6;">00 01 00 80</div>
<div class="m" style="left:379.5px;top:924px;color:#e6e6e6;">01 00 00 00</div>
<div class="m" style="left:464.5px;top:924px;color:#e0e0e0;">................</div>
<div class="m" style="left:7.5px;top:935px;color:#b0aca4;">000000156DAFF980</div>
<div class="m" style="left:127.5px;top:935px;color:#e6e6e6;">60 5A 5C A6</div>
<div class="m" style="left:211.5px;top:935px;color:#e6e6e6;">6D 01 00 00</div>
<div class="m" style="left:295.5px;top:935px;color:#e6e6e6;">00 00 00 00</div>
<div class="m" style="left:379.5px;top:935px;color:#e6e6e6;">00 00 00 00</div>
<div class="m" style="left:464.5px;top:935px;color:#e0e0e0;">`Z\¦m...........</div>
<div class="m" style="left:7.5px;top:946px;color:#b0aca4;">000000156DAFF990</div>
<div class="m" style="left:127.5px;top:946px;color:#e6e6e6;">50 BD 93 A6</div>
<div class="m" style="left:211.5px;top:946px;color:#e6e6e6;">6D 01 00 00</div>
<div class="m" style="left:295.5px;top:946px;color:#e6e6e6;">40 F2 00 80</div>
<div class="m" style="left:379.5px;top:946px;color:#e6e6e6;">01 00 00 00</div>
<div class="m" style="left:464.5px;top:946px;color:#e0e0e0;">P½.¦m...@ò......</div>
<div class="m" style="left:7.5px;top:957px;color:#a890f0;">000000156DAFF9A0</div>
<div class="m" style="left:127.5px;top:957px;color:#e6e6e6;">F0 70 41 8D</div>
<div class="m" style="left:211.5px;top:957px;color:#e6e6e6;">FB 7F 00 00</div>
<div class="m" style="left:295.5px;top:957px;color:#e6e6e6;">00 00 00 00</div>
<div class="m" style="left:379.5px;top:957px;color:#e6e6e6;">28 7F 01 00</div>
<div class="m" style="left:464.5px;top:957px;color:#e0e0e0;">ðpA.û.......(...</div>
<div class="m" style="left:7.5px;top:968px;color:#b0aca4;">000000156DAFF9B0</div>
<div class="m" style="left:127.5px;top:968px;color:#e6e6e6;">00 F0 00 00</div>
<div class="m" style="left:211.5px;top:968px;color:#e6e6e6;">00 00 00 00</div>
<div class="m" style="left:295.5px;top:968px;color:#e6e6e6;">00 00 00 00</div>
<div class="m" style="left:379.5px;top:968px;color:#e6e6e6;">00 00 00 00</div>
<div class="m" style="left:464.5px;top:968px;color:#e0e0e0;">.ð..............</div>
<svg style="left:1146px;top:747px" width="10" height="8" viewBox="0 0 10 8"><path d="M1 7 L5 1 L9 7 Z" fill="#8a8a8a"/></svg>
<div style="left:1146px;top:759px;width:10px;height:201px;background:#414141;border-radius:5px"></div>
<div style="left:1146px;top:923px;width:10px;height:24px;background:#787878;border-radius:5px"></div>
<svg style="left:1146px;top:964px" width="10" height="8" viewBox="0 0 10 8"><path d="M1 1 L5 7 L9 1 Z" fill="#8a8a8a"/></svg>
<div style="left:1162px;top:714px;width:1px;height:262px;background:#5a5a5a;"></div>
<div style="left:1283px;top:714px;width:1px;height:243px;background:#5e5e5e;"></div>
<div style="left:1405px;top:714px;width:1px;height:243px;background:#5e5e5e;"></div>
<div style="left:1164px;top:913px;width:736px;height:11px;background:#3f3f3f;"></div>
<div class="m" style="left:1168.5px;top:716px;color:#8cf040;">000000156DAFF7F0</div>
<div class="m" style="left:1288px;top:716px;color:#e6e6e6;">0000000000000000</div>
<div class="m" style="left:1168.5px;top:727px;color:#b0aca4;">000000156DAFF7F8</div>
<div class="m" style="left:1288px;top:727px;color:#e6e6e6;">0000000000000000</div>
<div class="m" style="left:1168.5px;top:738px;color:#b0aca4;">000000156DAFF800</div>
<div class="m" style="left:1288px;top:738px;color:#e6e6e6;">0000000000000000</div>
<div class="m" style="left:1168.5px;top:749px;color:#b0aca4;">000000156DAFF808</div>
<div class="m" style="left:1288px;top:749px;color:#e6e6e6;">0000000000000000</div>
<div class="m" style="left:1168.5px;top:760px;color:#b0aca4;">000000156DAFF810</div>
<div class="m" style="left:1288px;top:760px;color:#e6e6e6;">0000016DAABC4390</div>
<div class="m" style="left:1410.5px;top:760px;color:#e8e8e8;width:490px;overflow:hidden">L"[SHELLCODE] Preparing for self-deletion and exit via assembly suicide stub"</div>
<div class="m" style="left:1168.5px;top:771px;color:#b0aca4;">000000156DAFF818</div>
<div class="m" style="left:1288px;top:771px;color:#e6e6e6;">0000000000000000</div>
<div class="m" style="left:1168.5px;top:782px;color:#b0aca4;">000000156DAFF820</div>
<div class="m" style="left:1288px;top:782px;color:#e6e6e6;">000000156DAFF880</div>
<div class="m" style="left:1168.5px;top:793px;color:#b0aca4;">000000156DAFF828</div>
<div class="m" style="left:1288px;top:793px;color:#e6e6e6;">00007FFB8E05B157</div>
<div class="m" style="left:1410.5px;top:793px;color:#f0607a;width:490px;overflow:hidden">return to ntdll.RtlFreeUnicodeString+17 from ntdll.RtlDeleteBoundaryDescriptor</div>
<div class="m" style="left:1168.5px;top:804px;color:#b0aca4;">000000156DAFF830</div>
<div class="m" style="left:1288px;top:804px;color:#e6e6e6;">0000016D9F000000</div>
<div class="m" style="left:1168.5px;top:815px;color:#b0aca4;">000000156DAFF838</div>
<div class="m" style="left:1288px;top:815px;color:#e6e6e6;">0000000000000000</div>
<div class="m" style="left:1168.5px;top:826px;color:#b0aca4;">000000156DAFF840</div>
<div class="m" style="left:1288px;top:826px;color:#e6e6e6;">0000016DA6A022C0</div>
<div class="m" style="left:1168.5px;top:837px;color:#b0aca4;">000000156DAFF848</div>
<div class="m" style="left:1288px;top:837px;color:#e6e6e6;">0000000000000000</div>
<div class="m" style="left:1168.5px;top:848px;color:#b0aca4;">000000156DAFF850</div>
<div class="m" style="left:1288px;top:848px;color:#e6e6e6;">0000000000000000</div>
<div class="m" style="left:1168.5px;top:859px;color:#b0aca4;">000000156DAFF858</div>
<div class="m" style="left:1288px;top:859px;color:#e6e6e6;">00007FFB8AB76FE0</div>
<div class="m" style="left:1410.5px;top:859px;color:#f0607a;width:490px;overflow:hidden">return to kernelbase.OutputDebugStringW+E0 from ???</div>
<div class="m" style="left:1168.5px;top:870px;color:#b0aca4;">000000156DAFF860</div>
<div class="m" style="left:1288px;top:870px;color:#e6e6e6;">000000156DAFF880</div>
<div class="m" style="left:1168.5px;top:881px;color:#b0aca4;">000000156DAFF868</div>
<div class="m" style="left:1288px;top:881px;color:#e6e6e6;">0000000000000000</div>
<div class="m" style="left:1168.5px;top:892px;color:#b0aca4;">000000156DAFF870</div>
<div class="m" style="left:1288px;top:892px;color:#e6e6e6;">0000000000000000</div>
<div class="m" style="left:1168.5px;top:903px;color:#b0aca4;">000000156DAFF878</div>
<div class="m" style="left:1288px;top:903px;color:#e6e6e6;">000000000000004E</div>
<div class="m" style="left:1168.5px;top:914px;color:#b0aca4;">000000156DAFF880</div>
<div class="m" style="left:1288px;top:914px;color:#e6e6e6;">0000000041C93148</div>
<div class="m" style="left:1168.5px;top:925px;color:#b0aca4;">000000156DAFF888</div>
<div class="m" style="left:1288px;top:925px;color:#e6e6e6;">0000000000000000</div>
<div class="m" style="left:1168.5px;top:936px;color:#b0aca4;">000000156DAFF890</div>
<div class="m" style="left:1288px;top:936px;color:#e6e6e6;">0000000000000000</div>
<div class="m" style="left:1168.5px;top:947px;color:#b0aca4;">000000156DAFF898</div>
<div class="m" style="left:1288px;top:947px;color:#e6e6e6;">0000000000000000</div>
<svg style="left:1905px;top:719px" width="10" height="8" viewBox="0 0 10 8"><path d="M1 7 L5 1 L9 7 Z" fill="#8a8a8a"/></svg>
<div style="left:1904px;top:731px;width:10px;height:211px;background:#414141;border-radius:5px"></div>
<div style="left:1904px;top:904px;width:10px;height:24px;background:#787878;border-radius:5px"></div>
<svg style="left:1905px;top:947px" width="10" height="8" viewBox="0 0 10 8"><path d="M1 1 L5 7 L9 1 Z" fill="#8a8a8a"/></svg>
<svg style="left:1167px;top:963px" width="8" height="10" viewBox="0 0 8 10"><path d="M7 1 L1 5 L7 9 Z" fill="#8a8a8a"/></svg>
<div style="left:1180px;top:963px;width:705px;height:10px;background:#414141;border-radius:5px"></div>
<div style="left:1180px;top:963px;width:211px;height:10px;background:#787878;border-radius:5px"></div>
<svg style="left:1889px;top:963px" width="8" height="10" viewBox="0 0 8 10"><path d="M1 1 L7 5 L1 9 Z" fill="#8a8a8a"/></svg>
<div style="left:0px;top:976px;width:1920px;height:1px;background:#2a2a2a;"></div>
<div class="s" style="left:1px;top:988px;color:#e8e8e8;font-size:11px;"><span style="display:inline-block;transform:scaleX(0.9294);transform-origin:0 0">Command:</span></div>
<div style="left:56px;top:985px;width:1758px;height:18px;background:#333333;border-radius:2px"></div>
<div class="m" style="left:59px;top:989.5px;color:#7a7a7a;">Commands are comma separated (like assembly instructions): mov eax, ebx</div>
<div style="left:1815px;top:980px;width:103px;height:28px;border:1px solid #5a5a5a;border-radius:2px;box-sizing:border-box"></div>
<div class="s" style="left:1820px;top:987px;color:#e8e8e8;font-size:11px;"><span style="display:inline-block;transform:scaleX(1.0327);transform-origin:0 0">Default</span></div>
<svg style="left:1905px;top:992px" width="9" height="6" viewBox="0 0 9 6"><path d="M1 1 L4.5 5 L8 1 Z" fill="#aaa"/></svg>
<div class="s" style="left:15.5px;top:1014px;color:#a8ae3a;font-size:11px;"><span style="display:inline-block;transform:scaleX(0.9246);transform-origin:0 0">Paused</span></div>
<div style="left:0px;top:1032px;width:1920px;height:1px;background:#444444;"></div>
<div class="s" style="left:71.5px;top:1014px;color:#e8e8e8;font-size:11px;"><span style="display:inline-block;transform:scaleX(0.9257);transform-origin:0 0">Dump:</span></div>
<div class="s" style="left:105.5px;top:1014px;color:#8ca4f8;font-size:11px;"><span style="display:inline-block;transform:scaleX(0.9546);transform-origin:0 0">000000156DAFF880</span></div>
<div style="left:105.5px;top:1025px;width:97.5px;height:1px;background:#8ca4f8;"></div>
<div class="s" style="left:207.5px;top:1014px;color:#e8e8e8;font-size:11px;"><span style="display:inline-block;transform:scaleX(1.1889);transform-origin:0 0">-&gt;</span></div>
<div class="s" style="left:221.5px;top:1014px;color:#8ca4f8;font-size:11px;"><span style="display:inline-block;transform:scaleX(0.9546);transform-origin:0 0">000000156DAFF880</span></div>
<div style="left:221.5px;top:1025px;width:97.5px;height:1px;background:#8ca4f8;"></div>
<div class="s" style="left:322.5px;top:1014px;color:#e8e8e8;font-size:11px;"><span style="display:inline-block;transform:scaleX(1.0027);transform-origin:0 0">(0x00000001 bytes)</span></div>
<div class="s" style="left:1743px;top:1014.5px;color:#e8e8e8;font-size:11px;"><span style="display:inline-block;transform:scaleX(0.9980);transform-origin:0 0">Time Wasted Debugging: 0:02:06:05</span></div>
<div style="left:501px;top:249px;width:226px;height:84px;border:5px solid #ed1c24;box-sizing:border-box"></div>
<div style="left:118px;top:753px;width:464px;height:23px;border:5px solid #ed1c24;box-sizing:border-box"></div>
<div style="left:1282px;top:904px;width:125px;height:29px;border:5px solid #ed1c24;box-sizing:border-box"></div>
</body></html>
